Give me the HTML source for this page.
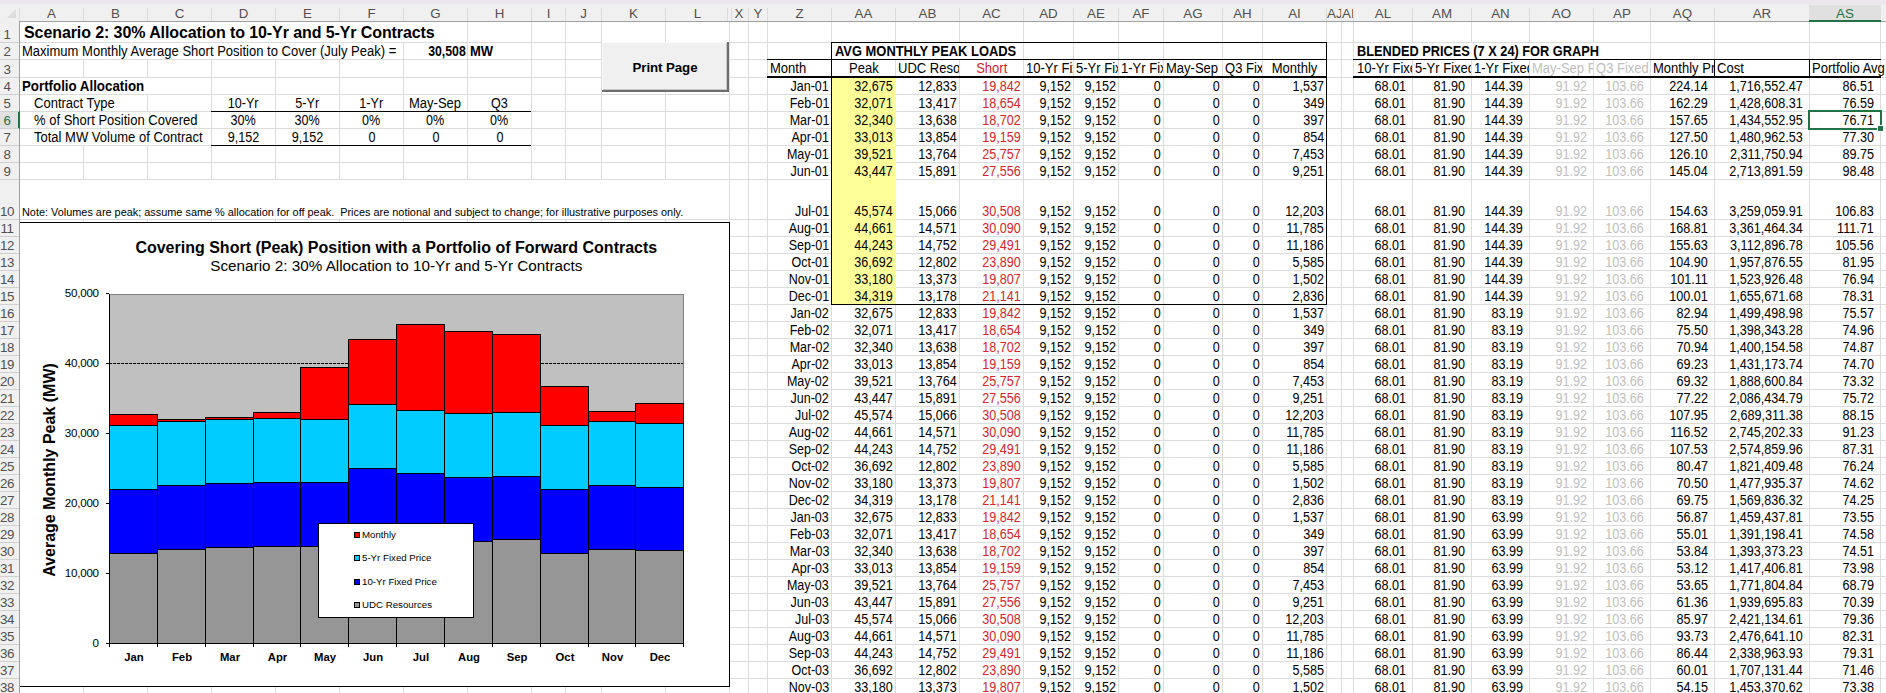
<!DOCTYPE html>
<html><head><meta charset="utf-8"><title>Scenario 2</title>
<style>
html,body{margin:0;padding:0;}
body{width:1886px;height:693px;overflow:hidden;position:relative;background:#fff;font-family:"Liberation Sans", sans-serif;}
.t{position:absolute;white-space:nowrap;}
.v{position:absolute;width:1px;}
.h{position:absolute;height:1px;}
.m{position:absolute;background:#fff;}
</style></head><body>
<div class="v" style="left:83px;top:21px;height:672px;background:#dcdcdc"></div>
<div class="v" style="left:147px;top:21px;height:672px;background:#dcdcdc"></div>
<div class="v" style="left:211px;top:21px;height:672px;background:#dcdcdc"></div>
<div class="v" style="left:275px;top:21px;height:672px;background:#dcdcdc"></div>
<div class="v" style="left:339px;top:21px;height:672px;background:#dcdcdc"></div>
<div class="v" style="left:403px;top:21px;height:672px;background:#dcdcdc"></div>
<div class="v" style="left:467px;top:21px;height:672px;background:#dcdcdc"></div>
<div class="v" style="left:531px;top:21px;height:672px;background:#dcdcdc"></div>
<div class="v" style="left:565px;top:21px;height:672px;background:#dcdcdc"></div>
<div class="v" style="left:601px;top:21px;height:672px;background:#dcdcdc"></div>
<div class="v" style="left:665px;top:21px;height:672px;background:#dcdcdc"></div>
<div class="v" style="left:729px;top:21px;height:672px;background:#dcdcdc"></div>
<div class="v" style="left:748px;top:21px;height:672px;background:#dcdcdc"></div>
<div class="v" style="left:767px;top:21px;height:672px;background:#dcdcdc"></div>
<div class="v" style="left:831px;top:21px;height:672px;background:#dcdcdc"></div>
<div class="v" style="left:895px;top:21px;height:672px;background:#dcdcdc"></div>
<div class="v" style="left:959px;top:21px;height:672px;background:#dcdcdc"></div>
<div class="v" style="left:1023px;top:21px;height:672px;background:#dcdcdc"></div>
<div class="v" style="left:1073px;top:21px;height:672px;background:#dcdcdc"></div>
<div class="v" style="left:1118px;top:21px;height:672px;background:#dcdcdc"></div>
<div class="v" style="left:1163px;top:21px;height:672px;background:#dcdcdc"></div>
<div class="v" style="left:1222px;top:21px;height:672px;background:#dcdcdc"></div>
<div class="v" style="left:1262px;top:21px;height:672px;background:#dcdcdc"></div>
<div class="v" style="left:1326px;top:21px;height:672px;background:#dcdcdc"></div>
<div class="v" style="left:1341px;top:21px;height:672px;background:#dcdcdc"></div>
<div class="v" style="left:1353px;top:21px;height:672px;background:#dcdcdc"></div>
<div class="v" style="left:1412px;top:21px;height:672px;background:#dcdcdc"></div>
<div class="v" style="left:1471px;top:21px;height:672px;background:#dcdcdc"></div>
<div class="v" style="left:1529px;top:21px;height:672px;background:#dcdcdc"></div>
<div class="v" style="left:1593px;top:21px;height:672px;background:#dcdcdc"></div>
<div class="v" style="left:1650px;top:21px;height:672px;background:#dcdcdc"></div>
<div class="v" style="left:1714px;top:21px;height:672px;background:#dcdcdc"></div>
<div class="v" style="left:1809px;top:21px;height:672px;background:#dcdcdc"></div>
<div class="v" style="left:1880px;top:21px;height:672px;background:#dcdcdc"></div>
<div class="h" style="left:20px;top:42px;width:1866px;background:#dcdcdc"></div>
<div class="h" style="left:20px;top:59px;width:1866px;background:#dcdcdc"></div>
<div class="h" style="left:20px;top:77px;width:1866px;background:#dcdcdc"></div>
<div class="h" style="left:20px;top:94px;width:1866px;background:#dcdcdc"></div>
<div class="h" style="left:20px;top:111px;width:1866px;background:#dcdcdc"></div>
<div class="h" style="left:20px;top:128px;width:1866px;background:#dcdcdc"></div>
<div class="h" style="left:20px;top:145px;width:1866px;background:#dcdcdc"></div>
<div class="h" style="left:20px;top:162px;width:1866px;background:#dcdcdc"></div>
<div class="h" style="left:20px;top:179px;width:1866px;background:#dcdcdc"></div>
<div class="h" style="left:20px;top:219px;width:1866px;background:#dcdcdc"></div>
<div class="h" style="left:20px;top:236px;width:1866px;background:#dcdcdc"></div>
<div class="h" style="left:20px;top:253px;width:1866px;background:#dcdcdc"></div>
<div class="h" style="left:20px;top:270px;width:1866px;background:#dcdcdc"></div>
<div class="h" style="left:20px;top:287px;width:1866px;background:#dcdcdc"></div>
<div class="h" style="left:20px;top:304px;width:1866px;background:#dcdcdc"></div>
<div class="h" style="left:20px;top:321px;width:1866px;background:#dcdcdc"></div>
<div class="h" style="left:20px;top:338px;width:1866px;background:#dcdcdc"></div>
<div class="h" style="left:20px;top:355px;width:1866px;background:#dcdcdc"></div>
<div class="h" style="left:20px;top:372px;width:1866px;background:#dcdcdc"></div>
<div class="h" style="left:20px;top:389px;width:1866px;background:#dcdcdc"></div>
<div class="h" style="left:20px;top:406px;width:1866px;background:#dcdcdc"></div>
<div class="h" style="left:20px;top:423px;width:1866px;background:#dcdcdc"></div>
<div class="h" style="left:20px;top:440px;width:1866px;background:#dcdcdc"></div>
<div class="h" style="left:20px;top:457px;width:1866px;background:#dcdcdc"></div>
<div class="h" style="left:20px;top:474px;width:1866px;background:#dcdcdc"></div>
<div class="h" style="left:20px;top:491px;width:1866px;background:#dcdcdc"></div>
<div class="h" style="left:20px;top:508px;width:1866px;background:#dcdcdc"></div>
<div class="h" style="left:20px;top:525px;width:1866px;background:#dcdcdc"></div>
<div class="h" style="left:20px;top:542px;width:1866px;background:#dcdcdc"></div>
<div class="h" style="left:20px;top:559px;width:1866px;background:#dcdcdc"></div>
<div class="h" style="left:20px;top:576px;width:1866px;background:#dcdcdc"></div>
<div class="h" style="left:20px;top:593px;width:1866px;background:#dcdcdc"></div>
<div class="h" style="left:20px;top:610px;width:1866px;background:#dcdcdc"></div>
<div class="h" style="left:20px;top:627px;width:1866px;background:#dcdcdc"></div>
<div class="h" style="left:20px;top:644px;width:1866px;background:#dcdcdc"></div>
<div class="h" style="left:20px;top:661px;width:1866px;background:#dcdcdc"></div>
<div class="h" style="left:20px;top:678px;width:1866px;background:#dcdcdc"></div>
<div class="m" style="left:20px;top:22px;width:447px;height:20px"></div>
<div class="m" style="left:20px;top:43px;width:383px;height:16px"></div>
<div class="m" style="left:20px;top:78px;width:191px;height:16px"></div>
<div class="m" style="left:20px;top:95px;width:127px;height:16px"></div>
<div class="m" style="left:20px;top:112px;width:191px;height:16px"></div>
<div class="m" style="left:20px;top:129px;width:191px;height:16px"></div>
<div class="m" style="left:20px;top:180px;width:709px;height:39px"></div>
<div class="m" style="left:832px;top:43px;width:191px;height:16px"></div>
<div class="m" style="left:1354px;top:43px;width:296px;height:16px"></div>
<div style="position:absolute;left:0;top:0;width:1886px;height:21px;background:#f0f0f0"></div>
<div style="position:absolute;left:0;top:0;width:1886px;height:6px;background:linear-gradient(#ede6ee 0px,#ebe6ee 3px,#efeff1 6px)"></div>
<div class="h" style="left:0;top:21px;width:1886px;background:#a0a0a0"></div>
<div style="position:absolute;left:0;top:21px;width:19px;height:672px;background:#f0f0f0"></div>
<div class="v" style="left:19px;top:21px;height:672px;background:#a0a0a0"></div>
<div class="v" style="left:19px;top:8px;height:13px;background:#dcdcdc"></div>
<svg style="position:absolute;left:0;top:0" width="20" height="21"><polygon points="16,9 16,18 7,18" fill="#dcdcdc"/></svg>
<div class="v" style="left:83px;top:8px;height:13px;background:#dcdcdc"></div>
<div class="v" style="left:147px;top:8px;height:13px;background:#dcdcdc"></div>
<div class="v" style="left:211px;top:8px;height:13px;background:#dcdcdc"></div>
<div class="v" style="left:275px;top:8px;height:13px;background:#dcdcdc"></div>
<div class="v" style="left:339px;top:8px;height:13px;background:#dcdcdc"></div>
<div class="v" style="left:403px;top:8px;height:13px;background:#dcdcdc"></div>
<div class="v" style="left:467px;top:8px;height:13px;background:#dcdcdc"></div>
<div class="v" style="left:531px;top:8px;height:13px;background:#dcdcdc"></div>
<div class="v" style="left:565px;top:8px;height:13px;background:#dcdcdc"></div>
<div class="v" style="left:601px;top:8px;height:13px;background:#dcdcdc"></div>
<div class="v" style="left:665px;top:8px;height:13px;background:#dcdcdc"></div>
<div class="v" style="left:729px;top:8px;height:13px;background:#dcdcdc"></div>
<div class="v" style="left:748px;top:8px;height:13px;background:#dcdcdc"></div>
<div class="v" style="left:767px;top:8px;height:13px;background:#dcdcdc"></div>
<div class="v" style="left:831px;top:8px;height:13px;background:#dcdcdc"></div>
<div class="v" style="left:895px;top:8px;height:13px;background:#dcdcdc"></div>
<div class="v" style="left:959px;top:8px;height:13px;background:#dcdcdc"></div>
<div class="v" style="left:1023px;top:8px;height:13px;background:#dcdcdc"></div>
<div class="v" style="left:1073px;top:8px;height:13px;background:#dcdcdc"></div>
<div class="v" style="left:1118px;top:8px;height:13px;background:#dcdcdc"></div>
<div class="v" style="left:1163px;top:8px;height:13px;background:#dcdcdc"></div>
<div class="v" style="left:1222px;top:8px;height:13px;background:#dcdcdc"></div>
<div class="v" style="left:1262px;top:8px;height:13px;background:#dcdcdc"></div>
<div class="v" style="left:1326px;top:8px;height:13px;background:#dcdcdc"></div>
<div class="v" style="left:1341px;top:8px;height:13px;background:#dcdcdc"></div>
<div class="v" style="left:1353px;top:8px;height:13px;background:#dcdcdc"></div>
<div class="v" style="left:1412px;top:8px;height:13px;background:#dcdcdc"></div>
<div class="v" style="left:1471px;top:8px;height:13px;background:#dcdcdc"></div>
<div class="v" style="left:1529px;top:8px;height:13px;background:#dcdcdc"></div>
<div class="v" style="left:1593px;top:8px;height:13px;background:#dcdcdc"></div>
<div class="v" style="left:1650px;top:8px;height:13px;background:#dcdcdc"></div>
<div class="v" style="left:1714px;top:8px;height:13px;background:#dcdcdc"></div>
<div class="v" style="left:1809px;top:8px;height:13px;background:#dcdcdc"></div>
<div class="v" style="left:1880px;top:8px;height:13px;background:#dcdcdc"></div>
<div class="v" style="left:727px;top:8px;height:13px;background:#dcdcdc"></div>
<div style="position:absolute;left:728px;top:8px;width:3px;height:13px;background:#f0f0f0"></div>
<div class="v" style="left:731px;top:8px;height:13px;background:#dcdcdc"></div>
<div style="position:absolute;left:1809px;top:5px;width:72px;height:16px;background:#e0e0e0"></div>
<div style="position:absolute;left:1809px;top:20px;width:72px;height:2px;background:#217346"></div>
<div class="t" style="left:20px;width:63px;top:5px;height:17px;line-height:17px;text-align:center;font-size:13.33px;color:#505050;overflow:hidden">A</div>
<div class="t" style="left:84px;width:63px;top:5px;height:17px;line-height:17px;text-align:center;font-size:13.33px;color:#505050;overflow:hidden">B</div>
<div class="t" style="left:148px;width:63px;top:5px;height:17px;line-height:17px;text-align:center;font-size:13.33px;color:#505050;overflow:hidden">C</div>
<div class="t" style="left:212px;width:63px;top:5px;height:17px;line-height:17px;text-align:center;font-size:13.33px;color:#505050;overflow:hidden">D</div>
<div class="t" style="left:276px;width:63px;top:5px;height:17px;line-height:17px;text-align:center;font-size:13.33px;color:#505050;overflow:hidden">E</div>
<div class="t" style="left:340px;width:63px;top:5px;height:17px;line-height:17px;text-align:center;font-size:13.33px;color:#505050;overflow:hidden">F</div>
<div class="t" style="left:404px;width:63px;top:5px;height:17px;line-height:17px;text-align:center;font-size:13.33px;color:#505050;overflow:hidden">G</div>
<div class="t" style="left:468px;width:63px;top:5px;height:17px;line-height:17px;text-align:center;font-size:13.33px;color:#505050;overflow:hidden">H</div>
<div class="t" style="left:532px;width:33px;top:5px;height:17px;line-height:17px;text-align:center;font-size:13.33px;color:#505050;overflow:hidden">I</div>
<div class="t" style="left:566px;width:35px;top:5px;height:17px;line-height:17px;text-align:center;font-size:13.33px;color:#505050;overflow:hidden">J</div>
<div class="t" style="left:602px;width:63px;top:5px;height:17px;line-height:17px;text-align:center;font-size:13.33px;color:#505050;overflow:hidden">K</div>
<div class="t" style="left:666px;width:63px;top:5px;height:17px;line-height:17px;text-align:center;font-size:13.33px;color:#505050;overflow:hidden">L</div>
<div class="t" style="left:730px;width:18px;top:5px;height:17px;line-height:17px;text-align:center;font-size:13.33px;color:#505050;overflow:hidden">X</div>
<div class="t" style="left:749px;width:18px;top:5px;height:17px;line-height:17px;text-align:center;font-size:13.33px;color:#505050;overflow:hidden">Y</div>
<div class="t" style="left:768px;width:63px;top:5px;height:17px;line-height:17px;text-align:center;font-size:13.33px;color:#505050;overflow:hidden">Z</div>
<div class="t" style="left:832px;width:63px;top:5px;height:17px;line-height:17px;text-align:center;font-size:13.33px;color:#505050;overflow:hidden">AA</div>
<div class="t" style="left:896px;width:63px;top:5px;height:17px;line-height:17px;text-align:center;font-size:13.33px;color:#505050;overflow:hidden">AB</div>
<div class="t" style="left:960px;width:63px;top:5px;height:17px;line-height:17px;text-align:center;font-size:13.33px;color:#505050;overflow:hidden">AC</div>
<div class="t" style="left:1024px;width:49px;top:5px;height:17px;line-height:17px;text-align:center;font-size:13.33px;color:#505050;overflow:hidden">AD</div>
<div class="t" style="left:1074px;width:44px;top:5px;height:17px;line-height:17px;text-align:center;font-size:13.33px;color:#505050;overflow:hidden">AE</div>
<div class="t" style="left:1119px;width:44px;top:5px;height:17px;line-height:17px;text-align:center;font-size:13.33px;color:#505050;overflow:hidden">AF</div>
<div class="t" style="left:1164px;width:58px;top:5px;height:17px;line-height:17px;text-align:center;font-size:13.33px;color:#505050;overflow:hidden">AG</div>
<div class="t" style="left:1223px;width:39px;top:5px;height:17px;line-height:17px;text-align:center;font-size:13.33px;color:#505050;overflow:hidden">AH</div>
<div class="t" style="left:1263px;width:63px;top:5px;height:17px;line-height:17px;text-align:center;font-size:13.33px;color:#505050;overflow:hidden">AI</div>
<div class="t" style="left:1327px;width:14px;top:5px;height:17px;line-height:17px;text-align:center;font-size:13.33px;color:#505050;overflow:hidden">AJ</div>
<div class="t" style="left:1342px;width:11px;top:5px;height:17px;line-height:17px;text-align:center;font-size:13.33px;color:#505050;overflow:hidden">AI</div>
<div class="t" style="left:1354px;width:58px;top:5px;height:17px;line-height:17px;text-align:center;font-size:13.33px;color:#505050;overflow:hidden">AL</div>
<div class="t" style="left:1413px;width:58px;top:5px;height:17px;line-height:17px;text-align:center;font-size:13.33px;color:#505050;overflow:hidden">AM</div>
<div class="t" style="left:1472px;width:57px;top:5px;height:17px;line-height:17px;text-align:center;font-size:13.33px;color:#505050;overflow:hidden">AN</div>
<div class="t" style="left:1530px;width:63px;top:5px;height:17px;line-height:17px;text-align:center;font-size:13.33px;color:#505050;overflow:hidden">AO</div>
<div class="t" style="left:1594px;width:56px;top:5px;height:17px;line-height:17px;text-align:center;font-size:13.33px;color:#505050;overflow:hidden">AP</div>
<div class="t" style="left:1651px;width:63px;top:5px;height:17px;line-height:17px;text-align:center;font-size:13.33px;color:#505050;overflow:hidden">AQ</div>
<div class="t" style="left:1715px;width:94px;top:5px;height:17px;line-height:17px;text-align:center;font-size:13.33px;color:#505050;overflow:hidden">AR</div>
<div class="t" style="left:1810px;width:70px;top:5px;height:17px;line-height:17px;text-align:center;font-size:13.33px;color:#217346;overflow:hidden">AS</div>
<div class="t" style="left:-5px;width:24px;top:26px;height:17px;line-height:17px;text-align:center;font-size:13.33px;color:#505050;letter-spacing:-0.3px">1</div>
<div class="t" style="left:-5px;width:24px;top:43px;height:17px;line-height:17px;text-align:center;font-size:13.33px;color:#505050;letter-spacing:-0.3px">2</div>
<div class="t" style="left:-5px;width:24px;top:61px;height:17px;line-height:17px;text-align:center;font-size:13.33px;color:#505050;letter-spacing:-0.3px">3</div>
<div class="t" style="left:-5px;width:24px;top:78px;height:17px;line-height:17px;text-align:center;font-size:13.33px;color:#505050;letter-spacing:-0.3px">4</div>
<div class="t" style="left:-5px;width:24px;top:95px;height:17px;line-height:17px;text-align:center;font-size:13.33px;color:#505050;letter-spacing:-0.3px">5</div>
<div style="position:absolute;left:0;top:112px;width:19px;height:16px;background:#e0e0e0"></div>
<div class="t" style="left:-5px;width:24px;top:112px;height:17px;line-height:17px;text-align:center;font-size:13.33px;color:#217346;letter-spacing:-0.3px">6</div>
<div class="t" style="left:-5px;width:24px;top:129px;height:17px;line-height:17px;text-align:center;font-size:13.33px;color:#505050;letter-spacing:-0.3px">7</div>
<div class="t" style="left:-5px;width:24px;top:146px;height:17px;line-height:17px;text-align:center;font-size:13.33px;color:#505050;letter-spacing:-0.3px">8</div>
<div class="t" style="left:-5px;width:24px;top:163px;height:17px;line-height:17px;text-align:center;font-size:13.33px;color:#505050;letter-spacing:-0.3px">9</div>
<div class="t" style="left:-5px;width:24px;top:203px;height:17px;line-height:17px;text-align:center;font-size:13.33px;color:#505050;letter-spacing:-0.3px">10</div>
<div class="t" style="left:-5px;width:24px;top:220px;height:17px;line-height:17px;text-align:center;font-size:13.33px;color:#505050;letter-spacing:-0.3px">11</div>
<div class="t" style="left:-5px;width:24px;top:237px;height:17px;line-height:17px;text-align:center;font-size:13.33px;color:#505050;letter-spacing:-0.3px">12</div>
<div class="t" style="left:-5px;width:24px;top:254px;height:17px;line-height:17px;text-align:center;font-size:13.33px;color:#505050;letter-spacing:-0.3px">13</div>
<div class="t" style="left:-5px;width:24px;top:271px;height:17px;line-height:17px;text-align:center;font-size:13.33px;color:#505050;letter-spacing:-0.3px">14</div>
<div class="t" style="left:-5px;width:24px;top:288px;height:17px;line-height:17px;text-align:center;font-size:13.33px;color:#505050;letter-spacing:-0.3px">15</div>
<div class="t" style="left:-5px;width:24px;top:305px;height:17px;line-height:17px;text-align:center;font-size:13.33px;color:#505050;letter-spacing:-0.3px">16</div>
<div class="t" style="left:-5px;width:24px;top:322px;height:17px;line-height:17px;text-align:center;font-size:13.33px;color:#505050;letter-spacing:-0.3px">17</div>
<div class="t" style="left:-5px;width:24px;top:339px;height:17px;line-height:17px;text-align:center;font-size:13.33px;color:#505050;letter-spacing:-0.3px">18</div>
<div class="t" style="left:-5px;width:24px;top:356px;height:17px;line-height:17px;text-align:center;font-size:13.33px;color:#505050;letter-spacing:-0.3px">19</div>
<div class="t" style="left:-5px;width:24px;top:373px;height:17px;line-height:17px;text-align:center;font-size:13.33px;color:#505050;letter-spacing:-0.3px">20</div>
<div class="t" style="left:-5px;width:24px;top:390px;height:17px;line-height:17px;text-align:center;font-size:13.33px;color:#505050;letter-spacing:-0.3px">21</div>
<div class="t" style="left:-5px;width:24px;top:407px;height:17px;line-height:17px;text-align:center;font-size:13.33px;color:#505050;letter-spacing:-0.3px">22</div>
<div class="t" style="left:-5px;width:24px;top:424px;height:17px;line-height:17px;text-align:center;font-size:13.33px;color:#505050;letter-spacing:-0.3px">23</div>
<div class="t" style="left:-5px;width:24px;top:441px;height:17px;line-height:17px;text-align:center;font-size:13.33px;color:#505050;letter-spacing:-0.3px">24</div>
<div class="t" style="left:-5px;width:24px;top:458px;height:17px;line-height:17px;text-align:center;font-size:13.33px;color:#505050;letter-spacing:-0.3px">25</div>
<div class="t" style="left:-5px;width:24px;top:475px;height:17px;line-height:17px;text-align:center;font-size:13.33px;color:#505050;letter-spacing:-0.3px">26</div>
<div class="t" style="left:-5px;width:24px;top:492px;height:17px;line-height:17px;text-align:center;font-size:13.33px;color:#505050;letter-spacing:-0.3px">27</div>
<div class="t" style="left:-5px;width:24px;top:509px;height:17px;line-height:17px;text-align:center;font-size:13.33px;color:#505050;letter-spacing:-0.3px">28</div>
<div class="t" style="left:-5px;width:24px;top:526px;height:17px;line-height:17px;text-align:center;font-size:13.33px;color:#505050;letter-spacing:-0.3px">29</div>
<div class="t" style="left:-5px;width:24px;top:543px;height:17px;line-height:17px;text-align:center;font-size:13.33px;color:#505050;letter-spacing:-0.3px">30</div>
<div class="t" style="left:-5px;width:24px;top:560px;height:17px;line-height:17px;text-align:center;font-size:13.33px;color:#505050;letter-spacing:-0.3px">31</div>
<div class="t" style="left:-5px;width:24px;top:577px;height:17px;line-height:17px;text-align:center;font-size:13.33px;color:#505050;letter-spacing:-0.3px">32</div>
<div class="t" style="left:-5px;width:24px;top:594px;height:17px;line-height:17px;text-align:center;font-size:13.33px;color:#505050;letter-spacing:-0.3px">33</div>
<div class="t" style="left:-5px;width:24px;top:611px;height:17px;line-height:17px;text-align:center;font-size:13.33px;color:#505050;letter-spacing:-0.3px">34</div>
<div class="t" style="left:-5px;width:24px;top:628px;height:17px;line-height:17px;text-align:center;font-size:13.33px;color:#505050;letter-spacing:-0.3px">35</div>
<div class="t" style="left:-5px;width:24px;top:645px;height:17px;line-height:17px;text-align:center;font-size:13.33px;color:#505050;letter-spacing:-0.3px">36</div>
<div class="t" style="left:-5px;width:24px;top:662px;height:17px;line-height:17px;text-align:center;font-size:13.33px;color:#505050;letter-spacing:-0.3px">37</div>
<div class="t" style="left:-5px;width:24px;top:679px;height:17px;line-height:17px;text-align:center;font-size:13.33px;color:#505050;letter-spacing:-0.3px">38</div>
<div style="position:absolute;left:18px;top:111px;width:2px;height:18px;background:#217346"></div>
<div class="h" style="left:0;top:42px;width:19px;background:#d0d0d0"></div>
<div class="h" style="left:0;top:59px;width:19px;background:#d0d0d0"></div>
<div class="h" style="left:0;top:77px;width:19px;background:#d0d0d0"></div>
<div class="h" style="left:0;top:94px;width:19px;background:#d0d0d0"></div>
<div class="h" style="left:0;top:111px;width:19px;background:#d0d0d0"></div>
<div class="h" style="left:0;top:128px;width:19px;background:#d0d0d0"></div>
<div class="h" style="left:0;top:145px;width:19px;background:#d0d0d0"></div>
<div class="h" style="left:0;top:162px;width:19px;background:#d0d0d0"></div>
<div class="h" style="left:0;top:179px;width:19px;background:#d0d0d0"></div>
<div class="h" style="left:0;top:219px;width:19px;background:#d0d0d0"></div>
<div class="h" style="left:0;top:236px;width:19px;background:#d0d0d0"></div>
<div class="h" style="left:0;top:253px;width:19px;background:#d0d0d0"></div>
<div class="h" style="left:0;top:270px;width:19px;background:#d0d0d0"></div>
<div class="h" style="left:0;top:287px;width:19px;background:#d0d0d0"></div>
<div class="h" style="left:0;top:304px;width:19px;background:#d0d0d0"></div>
<div class="h" style="left:0;top:321px;width:19px;background:#d0d0d0"></div>
<div class="h" style="left:0;top:338px;width:19px;background:#d0d0d0"></div>
<div class="h" style="left:0;top:355px;width:19px;background:#d0d0d0"></div>
<div class="h" style="left:0;top:372px;width:19px;background:#d0d0d0"></div>
<div class="h" style="left:0;top:389px;width:19px;background:#d0d0d0"></div>
<div class="h" style="left:0;top:406px;width:19px;background:#d0d0d0"></div>
<div class="h" style="left:0;top:423px;width:19px;background:#d0d0d0"></div>
<div class="h" style="left:0;top:440px;width:19px;background:#d0d0d0"></div>
<div class="h" style="left:0;top:457px;width:19px;background:#d0d0d0"></div>
<div class="h" style="left:0;top:474px;width:19px;background:#d0d0d0"></div>
<div class="h" style="left:0;top:491px;width:19px;background:#d0d0d0"></div>
<div class="h" style="left:0;top:508px;width:19px;background:#d0d0d0"></div>
<div class="h" style="left:0;top:525px;width:19px;background:#d0d0d0"></div>
<div class="h" style="left:0;top:542px;width:19px;background:#d0d0d0"></div>
<div class="h" style="left:0;top:559px;width:19px;background:#d0d0d0"></div>
<div class="h" style="left:0;top:576px;width:19px;background:#d0d0d0"></div>
<div class="h" style="left:0;top:593px;width:19px;background:#d0d0d0"></div>
<div class="h" style="left:0;top:610px;width:19px;background:#d0d0d0"></div>
<div class="h" style="left:0;top:627px;width:19px;background:#d0d0d0"></div>
<div class="h" style="left:0;top:644px;width:19px;background:#d0d0d0"></div>
<div class="h" style="left:0;top:661px;width:19px;background:#d0d0d0"></div>
<div class="h" style="left:0;top:678px;width:19px;background:#d0d0d0"></div>
<div class="h" style="left:0;top:695px;width:19px;background:#d0d0d0"></div>
<div class="t" style="top:26px;height:17px;line-height:17px;font-size:16px;color:#000;font-weight:bold;letter-spacing:-0.09px;left:24px;line-height:19px;height:19px;top:23px;">Scenario 2: 30% Allocation to 10-Yr and 5-Yr Contracts</div>
<div class="t" style="top:43px;height:17px;line-height:17px;font-size:14px;color:#000;left:22px;"><span style="display:inline-block;transform:scaleX(0.93);transform-origin:left">Maximum Monthly Average Short Position to Cover (July Peak) =</span></div>
<div class="t" style="top:43px;height:17px;line-height:17px;font-size:14px;color:#000;font-weight:bold;right:1420px;"><span style="display:inline-block;transform:scaleX(0.88);transform-origin:right">30,508</span></div>
<div class="t" style="top:43px;height:17px;line-height:17px;font-size:14px;color:#000;font-weight:bold;left:470px;"><span style="display:inline-block;transform:scaleX(0.93);transform-origin:left">MW</span></div>
<div class="t" style="top:78px;height:17px;line-height:17px;font-size:14px;color:#000;font-weight:bold;left:22px;"><span style="display:inline-block;transform:scaleX(0.95);transform-origin:left">Portfolio Allocation</span></div>
<div class="t" style="top:95px;height:17px;line-height:17px;font-size:14px;color:#000;left:34px;"><span style="display:inline-block;transform:scaleX(0.93);transform-origin:left">Contract Type</span></div>
<div class="t" style="top:112px;height:17px;line-height:17px;font-size:14px;color:#000;left:34px;"><span style="display:inline-block;transform:scaleX(0.93);transform-origin:left">% of Short Position Covered</span></div>
<div class="t" style="top:129px;height:17px;line-height:17px;font-size:14px;color:#000;left:34px;"><span style="display:inline-block;transform:scaleX(0.93);transform-origin:left">Total MW Volume of Contract</span></div>
<div class="t" style="top:95px;height:17px;line-height:17px;font-size:14px;color:#000;left:212px;width:63px;text-align:center;"><span style="display:inline-block;transform:scaleX(0.9);transform-origin:center">10-Yr</span></div>
<div class="t" style="top:112px;height:17px;line-height:17px;font-size:14px;color:#000;left:212px;width:63px;text-align:center;"><span style="display:inline-block;transform:scaleX(0.9);transform-origin:center">30%</span></div>
<div class="t" style="top:129px;height:17px;line-height:17px;font-size:14px;color:#000;left:212px;width:63px;text-align:center;"><span style="display:inline-block;transform:scaleX(0.9);transform-origin:center">9,152</span></div>
<div class="t" style="top:95px;height:17px;line-height:17px;font-size:14px;color:#000;left:276px;width:63px;text-align:center;"><span style="display:inline-block;transform:scaleX(0.9);transform-origin:center">5-Yr</span></div>
<div class="t" style="top:112px;height:17px;line-height:17px;font-size:14px;color:#000;left:276px;width:63px;text-align:center;"><span style="display:inline-block;transform:scaleX(0.9);transform-origin:center">30%</span></div>
<div class="t" style="top:129px;height:17px;line-height:17px;font-size:14px;color:#000;left:276px;width:63px;text-align:center;"><span style="display:inline-block;transform:scaleX(0.9);transform-origin:center">9,152</span></div>
<div class="t" style="top:95px;height:17px;line-height:17px;font-size:14px;color:#000;left:340px;width:63px;text-align:center;"><span style="display:inline-block;transform:scaleX(0.9);transform-origin:center">1-Yr</span></div>
<div class="t" style="top:112px;height:17px;line-height:17px;font-size:14px;color:#000;left:340px;width:63px;text-align:center;"><span style="display:inline-block;transform:scaleX(0.9);transform-origin:center">0%</span></div>
<div class="t" style="top:129px;height:17px;line-height:17px;font-size:14px;color:#000;left:340px;width:63px;text-align:center;"><span style="display:inline-block;transform:scaleX(0.9);transform-origin:center">0</span></div>
<div class="t" style="top:95px;height:17px;line-height:17px;font-size:14px;color:#000;left:404px;width:63px;text-align:center;"><span style="display:inline-block;transform:scaleX(0.93);transform-origin:center">May-Sep</span></div>
<div class="t" style="top:112px;height:17px;line-height:17px;font-size:14px;color:#000;left:404px;width:63px;text-align:center;"><span style="display:inline-block;transform:scaleX(0.9);transform-origin:center">0%</span></div>
<div class="t" style="top:129px;height:17px;line-height:17px;font-size:14px;color:#000;left:404px;width:63px;text-align:center;"><span style="display:inline-block;transform:scaleX(0.9);transform-origin:center">0</span></div>
<div class="t" style="top:95px;height:17px;line-height:17px;font-size:14px;color:#000;left:468px;width:63px;text-align:center;"><span style="display:inline-block;transform:scaleX(0.9);transform-origin:center">Q3</span></div>
<div class="t" style="top:112px;height:17px;line-height:17px;font-size:14px;color:#000;left:468px;width:63px;text-align:center;"><span style="display:inline-block;transform:scaleX(0.9);transform-origin:center">0%</span></div>
<div class="t" style="top:129px;height:17px;line-height:17px;font-size:14px;color:#000;left:468px;width:63px;text-align:center;"><span style="display:inline-block;transform:scaleX(0.9);transform-origin:center">0</span></div>
<div class="h" style="left:211px;top:111px;width:320px;background:#000"></div>
<div class="h" style="left:211px;top:145px;width:320px;background:#000"></div>
<div class="t" style="top:203px;height:17px;line-height:17px;font-size:10.9px;color:#000;left:22px;white-space:pre;top:204px;">Note: Volumes are peak; assume same % allocation for off peak.  Prices are notional and subject to change; for illustrative purposes only.</div>
<div style="position:absolute;left:602px;top:42px;width:127px;height:50px;background:#f0f0f0;border-top:1px solid #fafafa;border-left:1px solid #fafafa;box-sizing:border-box"></div>
<div style="position:absolute;left:602px;top:90px;width:127px;height:2px;background:#6e6e6e"></div>
<div style="position:absolute;left:727px;top:42px;width:2px;height:50px;background:#6e6e6e"></div>
<div style="position:absolute;left:603px;top:89px;width:124px;height:1px;background:#c8c8c8"></div>
<div style="position:absolute;left:726px;top:43px;width:1px;height:47px;background:#c8c8c8"></div>
<div class="t" style="left:602px;top:59px;width:126px;height:17px;line-height:17px;text-align:center;font-size:13.33px;font-weight:bold;letter-spacing:-0.1px">Print Page</div>
<div style="position:absolute;left:832px;top:78px;width:64px;height:226px;background:#ffff99"></div>
<div class="t" style="top:43px;height:17px;line-height:17px;font-size:14px;color:#000;font-weight:bold;left:835px;"><span style="display:inline-block;transform:scaleX(0.922);transform-origin:left">AVG MONTHLY PEAK LOADS</span></div>
<div class="t" style="top:60px;height:17px;line-height:17px;font-size:14px;color:#000;left:770px;"><span style="display:inline-block;transform:scaleX(0.93);transform-origin:left">Month</span></div>
<div class="t" style="top:60px;height:17px;line-height:17px;font-size:14px;color:#000;left:832px;width:63px;text-align:center;"><span style="display:inline-block;transform:scaleX(0.93);transform-origin:center">Peak</span></div>
<div class="t" style="top:60px;height:17px;line-height:17px;font-size:14px;color:#000;left:896px;width:63px;overflow:hidden;padding-left:2px;box-sizing:border-box;"><span style="display:inline-block;transform:scaleX(0.93);transform-origin:left">UDC Resources</span></div>
<div class="t" style="top:60px;height:17px;line-height:17px;font-size:14px;color:#d4262c;left:960px;width:63px;text-align:center;"><span style="display:inline-block;transform:scaleX(0.93);transform-origin:center">Short</span></div>
<div class="t" style="top:60px;height:17px;line-height:17px;font-size:14px;color:#000;left:1024px;width:49px;overflow:hidden;padding-left:2px;box-sizing:border-box;"><span style="display:inline-block;transform:scaleX(0.93);transform-origin:left">10-Yr Fixed</span></div>
<div class="t" style="top:60px;height:17px;line-height:17px;font-size:14px;color:#000;left:1074px;width:44px;overflow:hidden;padding-left:2px;box-sizing:border-box;"><span style="display:inline-block;transform:scaleX(0.93);transform-origin:left">5-Yr Fixed</span></div>
<div class="t" style="top:60px;height:17px;line-height:17px;font-size:14px;color:#000;left:1119px;width:44px;overflow:hidden;padding-left:2px;box-sizing:border-box;"><span style="display:inline-block;transform:scaleX(0.93);transform-origin:left">1-Yr Fixed</span></div>
<div class="t" style="top:60px;height:17px;line-height:17px;font-size:14px;color:#000;left:1164px;width:58px;overflow:hidden;padding-left:2px;box-sizing:border-box;"><span style="display:inline-block;transform:scaleX(0.93);transform-origin:left">May-Sep Fixed</span></div>
<div class="t" style="top:60px;height:17px;line-height:17px;font-size:14px;color:#000;left:1223px;width:39px;overflow:hidden;padding-left:2px;box-sizing:border-box;"><span style="display:inline-block;transform:scaleX(0.93);transform-origin:left">Q3 Fixed</span></div>
<div class="t" style="top:60px;height:17px;line-height:17px;font-size:14px;color:#000;left:1263px;width:63px;text-align:center;"><span style="display:inline-block;transform:scaleX(0.93);transform-origin:center">Monthly</span></div>
<div class="t" style="top:78px;height:17px;line-height:17px;font-size:14px;color:#000;right:1057px;"><span style="display:inline-block;transform:scaleX(0.895);transform-origin:right">Jan-01</span></div>
<div class="t" style="top:78px;height:17px;line-height:17px;font-size:14px;color:#000;right:993px;"><span style="display:inline-block;transform:scaleX(0.9);transform-origin:right">32,675</span></div>
<div class="t" style="top:78px;height:17px;line-height:17px;font-size:14px;color:#000;right:929px;"><span style="display:inline-block;transform:scaleX(0.9);transform-origin:right">12,833</span></div>
<div class="t" style="top:78px;height:17px;line-height:17px;font-size:14px;color:#d4262c;right:865px;"><span style="display:inline-block;transform:scaleX(0.9);transform-origin:right">19,842</span></div>
<div class="t" style="top:78px;height:17px;line-height:17px;font-size:14px;color:#000;right:815px;"><span style="display:inline-block;transform:scaleX(0.9);transform-origin:right">9,152</span></div>
<div class="t" style="top:78px;height:17px;line-height:17px;font-size:14px;color:#000;right:770px;"><span style="display:inline-block;transform:scaleX(0.9);transform-origin:right">9,152</span></div>
<div class="t" style="top:78px;height:17px;line-height:17px;font-size:14px;color:#000;right:725px;"><span style="display:inline-block;transform:scaleX(0.9);transform-origin:right">0</span></div>
<div class="t" style="top:78px;height:17px;line-height:17px;font-size:14px;color:#000;right:666px;"><span style="display:inline-block;transform:scaleX(0.9);transform-origin:right">0</span></div>
<div class="t" style="top:78px;height:17px;line-height:17px;font-size:14px;color:#000;right:626px;"><span style="display:inline-block;transform:scaleX(0.9);transform-origin:right">0</span></div>
<div class="t" style="top:78px;height:17px;line-height:17px;font-size:14px;color:#000;right:562px;"><span style="display:inline-block;transform:scaleX(0.9);transform-origin:right">1,537</span></div>
<div class="t" style="top:78px;height:17px;line-height:17px;font-size:14px;color:#000;right:480px;"><span style="display:inline-block;transform:scaleX(0.9);transform-origin:right">68.01</span></div>
<div class="t" style="top:78px;height:17px;line-height:17px;font-size:14px;color:#000;right:421px;"><span style="display:inline-block;transform:scaleX(0.9);transform-origin:right">81.90</span></div>
<div class="t" style="top:78px;height:17px;line-height:17px;font-size:14px;color:#000;right:363px;"><span style="display:inline-block;transform:scaleX(0.9);transform-origin:right">144.39</span></div>
<div class="t" style="top:78px;height:17px;line-height:17px;font-size:14px;color:#c0c0c0;right:299px;"><span style="display:inline-block;transform:scaleX(0.9);transform-origin:right">91.92</span></div>
<div class="t" style="top:78px;height:17px;line-height:17px;font-size:14px;color:#c0c0c0;right:242px;"><span style="display:inline-block;transform:scaleX(0.9);transform-origin:right">103.66</span></div>
<div class="t" style="top:78px;height:17px;line-height:17px;font-size:14px;color:#000;right:178px;"><span style="display:inline-block;transform:scaleX(0.9);transform-origin:right">224.14</span></div>
<div class="t" style="top:78px;height:17px;line-height:17px;font-size:14px;color:#000;right:83px;"><span style="display:inline-block;transform:scaleX(0.9);transform-origin:right">1,716,552.47</span></div>
<div class="t" style="top:78px;height:17px;line-height:17px;font-size:14px;color:#000;right:12px;"><span style="display:inline-block;transform:scaleX(0.9);transform-origin:right">86.51</span></div>
<div class="t" style="top:95px;height:17px;line-height:17px;font-size:14px;color:#000;right:1057px;"><span style="display:inline-block;transform:scaleX(0.895);transform-origin:right">Feb-01</span></div>
<div class="t" style="top:95px;height:17px;line-height:17px;font-size:14px;color:#000;right:993px;"><span style="display:inline-block;transform:scaleX(0.9);transform-origin:right">32,071</span></div>
<div class="t" style="top:95px;height:17px;line-height:17px;font-size:14px;color:#000;right:929px;"><span style="display:inline-block;transform:scaleX(0.9);transform-origin:right">13,417</span></div>
<div class="t" style="top:95px;height:17px;line-height:17px;font-size:14px;color:#d4262c;right:865px;"><span style="display:inline-block;transform:scaleX(0.9);transform-origin:right">18,654</span></div>
<div class="t" style="top:95px;height:17px;line-height:17px;font-size:14px;color:#000;right:815px;"><span style="display:inline-block;transform:scaleX(0.9);transform-origin:right">9,152</span></div>
<div class="t" style="top:95px;height:17px;line-height:17px;font-size:14px;color:#000;right:770px;"><span style="display:inline-block;transform:scaleX(0.9);transform-origin:right">9,152</span></div>
<div class="t" style="top:95px;height:17px;line-height:17px;font-size:14px;color:#000;right:725px;"><span style="display:inline-block;transform:scaleX(0.9);transform-origin:right">0</span></div>
<div class="t" style="top:95px;height:17px;line-height:17px;font-size:14px;color:#000;right:666px;"><span style="display:inline-block;transform:scaleX(0.9);transform-origin:right">0</span></div>
<div class="t" style="top:95px;height:17px;line-height:17px;font-size:14px;color:#000;right:626px;"><span style="display:inline-block;transform:scaleX(0.9);transform-origin:right">0</span></div>
<div class="t" style="top:95px;height:17px;line-height:17px;font-size:14px;color:#000;right:562px;"><span style="display:inline-block;transform:scaleX(0.9);transform-origin:right">349</span></div>
<div class="t" style="top:95px;height:17px;line-height:17px;font-size:14px;color:#000;right:480px;"><span style="display:inline-block;transform:scaleX(0.9);transform-origin:right">68.01</span></div>
<div class="t" style="top:95px;height:17px;line-height:17px;font-size:14px;color:#000;right:421px;"><span style="display:inline-block;transform:scaleX(0.9);transform-origin:right">81.90</span></div>
<div class="t" style="top:95px;height:17px;line-height:17px;font-size:14px;color:#000;right:363px;"><span style="display:inline-block;transform:scaleX(0.9);transform-origin:right">144.39</span></div>
<div class="t" style="top:95px;height:17px;line-height:17px;font-size:14px;color:#c0c0c0;right:299px;"><span style="display:inline-block;transform:scaleX(0.9);transform-origin:right">91.92</span></div>
<div class="t" style="top:95px;height:17px;line-height:17px;font-size:14px;color:#c0c0c0;right:242px;"><span style="display:inline-block;transform:scaleX(0.9);transform-origin:right">103.66</span></div>
<div class="t" style="top:95px;height:17px;line-height:17px;font-size:14px;color:#000;right:178px;"><span style="display:inline-block;transform:scaleX(0.9);transform-origin:right">162.29</span></div>
<div class="t" style="top:95px;height:17px;line-height:17px;font-size:14px;color:#000;right:83px;"><span style="display:inline-block;transform:scaleX(0.9);transform-origin:right">1,428,608.31</span></div>
<div class="t" style="top:95px;height:17px;line-height:17px;font-size:14px;color:#000;right:12px;"><span style="display:inline-block;transform:scaleX(0.9);transform-origin:right">76.59</span></div>
<div class="t" style="top:112px;height:17px;line-height:17px;font-size:14px;color:#000;right:1057px;"><span style="display:inline-block;transform:scaleX(0.895);transform-origin:right">Mar-01</span></div>
<div class="t" style="top:112px;height:17px;line-height:17px;font-size:14px;color:#000;right:993px;"><span style="display:inline-block;transform:scaleX(0.9);transform-origin:right">32,340</span></div>
<div class="t" style="top:112px;height:17px;line-height:17px;font-size:14px;color:#000;right:929px;"><span style="display:inline-block;transform:scaleX(0.9);transform-origin:right">13,638</span></div>
<div class="t" style="top:112px;height:17px;line-height:17px;font-size:14px;color:#d4262c;right:865px;"><span style="display:inline-block;transform:scaleX(0.9);transform-origin:right">18,702</span></div>
<div class="t" style="top:112px;height:17px;line-height:17px;font-size:14px;color:#000;right:815px;"><span style="display:inline-block;transform:scaleX(0.9);transform-origin:right">9,152</span></div>
<div class="t" style="top:112px;height:17px;line-height:17px;font-size:14px;color:#000;right:770px;"><span style="display:inline-block;transform:scaleX(0.9);transform-origin:right">9,152</span></div>
<div class="t" style="top:112px;height:17px;line-height:17px;font-size:14px;color:#000;right:725px;"><span style="display:inline-block;transform:scaleX(0.9);transform-origin:right">0</span></div>
<div class="t" style="top:112px;height:17px;line-height:17px;font-size:14px;color:#000;right:666px;"><span style="display:inline-block;transform:scaleX(0.9);transform-origin:right">0</span></div>
<div class="t" style="top:112px;height:17px;line-height:17px;font-size:14px;color:#000;right:626px;"><span style="display:inline-block;transform:scaleX(0.9);transform-origin:right">0</span></div>
<div class="t" style="top:112px;height:17px;line-height:17px;font-size:14px;color:#000;right:562px;"><span style="display:inline-block;transform:scaleX(0.9);transform-origin:right">397</span></div>
<div class="t" style="top:112px;height:17px;line-height:17px;font-size:14px;color:#000;right:480px;"><span style="display:inline-block;transform:scaleX(0.9);transform-origin:right">68.01</span></div>
<div class="t" style="top:112px;height:17px;line-height:17px;font-size:14px;color:#000;right:421px;"><span style="display:inline-block;transform:scaleX(0.9);transform-origin:right">81.90</span></div>
<div class="t" style="top:112px;height:17px;line-height:17px;font-size:14px;color:#000;right:363px;"><span style="display:inline-block;transform:scaleX(0.9);transform-origin:right">144.39</span></div>
<div class="t" style="top:112px;height:17px;line-height:17px;font-size:14px;color:#c0c0c0;right:299px;"><span style="display:inline-block;transform:scaleX(0.9);transform-origin:right">91.92</span></div>
<div class="t" style="top:112px;height:17px;line-height:17px;font-size:14px;color:#c0c0c0;right:242px;"><span style="display:inline-block;transform:scaleX(0.9);transform-origin:right">103.66</span></div>
<div class="t" style="top:112px;height:17px;line-height:17px;font-size:14px;color:#000;right:178px;"><span style="display:inline-block;transform:scaleX(0.9);transform-origin:right">157.65</span></div>
<div class="t" style="top:112px;height:17px;line-height:17px;font-size:14px;color:#000;right:83px;"><span style="display:inline-block;transform:scaleX(0.9);transform-origin:right">1,434,552.95</span></div>
<div class="t" style="top:112px;height:17px;line-height:17px;font-size:14px;color:#000;right:12px;"><span style="display:inline-block;transform:scaleX(0.9);transform-origin:right">76.71</span></div>
<div class="t" style="top:129px;height:17px;line-height:17px;font-size:14px;color:#000;right:1057px;"><span style="display:inline-block;transform:scaleX(0.895);transform-origin:right">Apr-01</span></div>
<div class="t" style="top:129px;height:17px;line-height:17px;font-size:14px;color:#000;right:993px;"><span style="display:inline-block;transform:scaleX(0.9);transform-origin:right">33,013</span></div>
<div class="t" style="top:129px;height:17px;line-height:17px;font-size:14px;color:#000;right:929px;"><span style="display:inline-block;transform:scaleX(0.9);transform-origin:right">13,854</span></div>
<div class="t" style="top:129px;height:17px;line-height:17px;font-size:14px;color:#d4262c;right:865px;"><span style="display:inline-block;transform:scaleX(0.9);transform-origin:right">19,159</span></div>
<div class="t" style="top:129px;height:17px;line-height:17px;font-size:14px;color:#000;right:815px;"><span style="display:inline-block;transform:scaleX(0.9);transform-origin:right">9,152</span></div>
<div class="t" style="top:129px;height:17px;line-height:17px;font-size:14px;color:#000;right:770px;"><span style="display:inline-block;transform:scaleX(0.9);transform-origin:right">9,152</span></div>
<div class="t" style="top:129px;height:17px;line-height:17px;font-size:14px;color:#000;right:725px;"><span style="display:inline-block;transform:scaleX(0.9);transform-origin:right">0</span></div>
<div class="t" style="top:129px;height:17px;line-height:17px;font-size:14px;color:#000;right:666px;"><span style="display:inline-block;transform:scaleX(0.9);transform-origin:right">0</span></div>
<div class="t" style="top:129px;height:17px;line-height:17px;font-size:14px;color:#000;right:626px;"><span style="display:inline-block;transform:scaleX(0.9);transform-origin:right">0</span></div>
<div class="t" style="top:129px;height:17px;line-height:17px;font-size:14px;color:#000;right:562px;"><span style="display:inline-block;transform:scaleX(0.9);transform-origin:right">854</span></div>
<div class="t" style="top:129px;height:17px;line-height:17px;font-size:14px;color:#000;right:480px;"><span style="display:inline-block;transform:scaleX(0.9);transform-origin:right">68.01</span></div>
<div class="t" style="top:129px;height:17px;line-height:17px;font-size:14px;color:#000;right:421px;"><span style="display:inline-block;transform:scaleX(0.9);transform-origin:right">81.90</span></div>
<div class="t" style="top:129px;height:17px;line-height:17px;font-size:14px;color:#000;right:363px;"><span style="display:inline-block;transform:scaleX(0.9);transform-origin:right">144.39</span></div>
<div class="t" style="top:129px;height:17px;line-height:17px;font-size:14px;color:#c0c0c0;right:299px;"><span style="display:inline-block;transform:scaleX(0.9);transform-origin:right">91.92</span></div>
<div class="t" style="top:129px;height:17px;line-height:17px;font-size:14px;color:#c0c0c0;right:242px;"><span style="display:inline-block;transform:scaleX(0.9);transform-origin:right">103.66</span></div>
<div class="t" style="top:129px;height:17px;line-height:17px;font-size:14px;color:#000;right:178px;"><span style="display:inline-block;transform:scaleX(0.9);transform-origin:right">127.50</span></div>
<div class="t" style="top:129px;height:17px;line-height:17px;font-size:14px;color:#000;right:83px;"><span style="display:inline-block;transform:scaleX(0.9);transform-origin:right">1,480,962.53</span></div>
<div class="t" style="top:129px;height:17px;line-height:17px;font-size:14px;color:#000;right:12px;"><span style="display:inline-block;transform:scaleX(0.9);transform-origin:right">77.30</span></div>
<div class="t" style="top:146px;height:17px;line-height:17px;font-size:14px;color:#000;right:1057px;"><span style="display:inline-block;transform:scaleX(0.895);transform-origin:right">May-01</span></div>
<div class="t" style="top:146px;height:17px;line-height:17px;font-size:14px;color:#000;right:993px;"><span style="display:inline-block;transform:scaleX(0.9);transform-origin:right">39,521</span></div>
<div class="t" style="top:146px;height:17px;line-height:17px;font-size:14px;color:#000;right:929px;"><span style="display:inline-block;transform:scaleX(0.9);transform-origin:right">13,764</span></div>
<div class="t" style="top:146px;height:17px;line-height:17px;font-size:14px;color:#d4262c;right:865px;"><span style="display:inline-block;transform:scaleX(0.9);transform-origin:right">25,757</span></div>
<div class="t" style="top:146px;height:17px;line-height:17px;font-size:14px;color:#000;right:815px;"><span style="display:inline-block;transform:scaleX(0.9);transform-origin:right">9,152</span></div>
<div class="t" style="top:146px;height:17px;line-height:17px;font-size:14px;color:#000;right:770px;"><span style="display:inline-block;transform:scaleX(0.9);transform-origin:right">9,152</span></div>
<div class="t" style="top:146px;height:17px;line-height:17px;font-size:14px;color:#000;right:725px;"><span style="display:inline-block;transform:scaleX(0.9);transform-origin:right">0</span></div>
<div class="t" style="top:146px;height:17px;line-height:17px;font-size:14px;color:#000;right:666px;"><span style="display:inline-block;transform:scaleX(0.9);transform-origin:right">0</span></div>
<div class="t" style="top:146px;height:17px;line-height:17px;font-size:14px;color:#000;right:626px;"><span style="display:inline-block;transform:scaleX(0.9);transform-origin:right">0</span></div>
<div class="t" style="top:146px;height:17px;line-height:17px;font-size:14px;color:#000;right:562px;"><span style="display:inline-block;transform:scaleX(0.9);transform-origin:right">7,453</span></div>
<div class="t" style="top:146px;height:17px;line-height:17px;font-size:14px;color:#000;right:480px;"><span style="display:inline-block;transform:scaleX(0.9);transform-origin:right">68.01</span></div>
<div class="t" style="top:146px;height:17px;line-height:17px;font-size:14px;color:#000;right:421px;"><span style="display:inline-block;transform:scaleX(0.9);transform-origin:right">81.90</span></div>
<div class="t" style="top:146px;height:17px;line-height:17px;font-size:14px;color:#000;right:363px;"><span style="display:inline-block;transform:scaleX(0.9);transform-origin:right">144.39</span></div>
<div class="t" style="top:146px;height:17px;line-height:17px;font-size:14px;color:#c0c0c0;right:299px;"><span style="display:inline-block;transform:scaleX(0.9);transform-origin:right">91.92</span></div>
<div class="t" style="top:146px;height:17px;line-height:17px;font-size:14px;color:#c0c0c0;right:242px;"><span style="display:inline-block;transform:scaleX(0.9);transform-origin:right">103.66</span></div>
<div class="t" style="top:146px;height:17px;line-height:17px;font-size:14px;color:#000;right:178px;"><span style="display:inline-block;transform:scaleX(0.9);transform-origin:right">126.10</span></div>
<div class="t" style="top:146px;height:17px;line-height:17px;font-size:14px;color:#000;right:83px;"><span style="display:inline-block;transform:scaleX(0.9);transform-origin:right">2,311,750.94</span></div>
<div class="t" style="top:146px;height:17px;line-height:17px;font-size:14px;color:#000;right:12px;"><span style="display:inline-block;transform:scaleX(0.9);transform-origin:right">89.75</span></div>
<div class="t" style="top:163px;height:17px;line-height:17px;font-size:14px;color:#000;right:1057px;"><span style="display:inline-block;transform:scaleX(0.895);transform-origin:right">Jun-01</span></div>
<div class="t" style="top:163px;height:17px;line-height:17px;font-size:14px;color:#000;right:993px;"><span style="display:inline-block;transform:scaleX(0.9);transform-origin:right">43,447</span></div>
<div class="t" style="top:163px;height:17px;line-height:17px;font-size:14px;color:#000;right:929px;"><span style="display:inline-block;transform:scaleX(0.9);transform-origin:right">15,891</span></div>
<div class="t" style="top:163px;height:17px;line-height:17px;font-size:14px;color:#d4262c;right:865px;"><span style="display:inline-block;transform:scaleX(0.9);transform-origin:right">27,556</span></div>
<div class="t" style="top:163px;height:17px;line-height:17px;font-size:14px;color:#000;right:815px;"><span style="display:inline-block;transform:scaleX(0.9);transform-origin:right">9,152</span></div>
<div class="t" style="top:163px;height:17px;line-height:17px;font-size:14px;color:#000;right:770px;"><span style="display:inline-block;transform:scaleX(0.9);transform-origin:right">9,152</span></div>
<div class="t" style="top:163px;height:17px;line-height:17px;font-size:14px;color:#000;right:725px;"><span style="display:inline-block;transform:scaleX(0.9);transform-origin:right">0</span></div>
<div class="t" style="top:163px;height:17px;line-height:17px;font-size:14px;color:#000;right:666px;"><span style="display:inline-block;transform:scaleX(0.9);transform-origin:right">0</span></div>
<div class="t" style="top:163px;height:17px;line-height:17px;font-size:14px;color:#000;right:626px;"><span style="display:inline-block;transform:scaleX(0.9);transform-origin:right">0</span></div>
<div class="t" style="top:163px;height:17px;line-height:17px;font-size:14px;color:#000;right:562px;"><span style="display:inline-block;transform:scaleX(0.9);transform-origin:right">9,251</span></div>
<div class="t" style="top:163px;height:17px;line-height:17px;font-size:14px;color:#000;right:480px;"><span style="display:inline-block;transform:scaleX(0.9);transform-origin:right">68.01</span></div>
<div class="t" style="top:163px;height:17px;line-height:17px;font-size:14px;color:#000;right:421px;"><span style="display:inline-block;transform:scaleX(0.9);transform-origin:right">81.90</span></div>
<div class="t" style="top:163px;height:17px;line-height:17px;font-size:14px;color:#000;right:363px;"><span style="display:inline-block;transform:scaleX(0.9);transform-origin:right">144.39</span></div>
<div class="t" style="top:163px;height:17px;line-height:17px;font-size:14px;color:#c0c0c0;right:299px;"><span style="display:inline-block;transform:scaleX(0.9);transform-origin:right">91.92</span></div>
<div class="t" style="top:163px;height:17px;line-height:17px;font-size:14px;color:#c0c0c0;right:242px;"><span style="display:inline-block;transform:scaleX(0.9);transform-origin:right">103.66</span></div>
<div class="t" style="top:163px;height:17px;line-height:17px;font-size:14px;color:#000;right:178px;"><span style="display:inline-block;transform:scaleX(0.9);transform-origin:right">145.04</span></div>
<div class="t" style="top:163px;height:17px;line-height:17px;font-size:14px;color:#000;right:83px;"><span style="display:inline-block;transform:scaleX(0.9);transform-origin:right">2,713,891.59</span></div>
<div class="t" style="top:163px;height:17px;line-height:17px;font-size:14px;color:#000;right:12px;"><span style="display:inline-block;transform:scaleX(0.9);transform-origin:right">98.48</span></div>
<div class="t" style="top:203px;height:17px;line-height:17px;font-size:14px;color:#000;right:1057px;"><span style="display:inline-block;transform:scaleX(0.895);transform-origin:right">Jul-01</span></div>
<div class="t" style="top:203px;height:17px;line-height:17px;font-size:14px;color:#000;right:993px;"><span style="display:inline-block;transform:scaleX(0.9);transform-origin:right">45,574</span></div>
<div class="t" style="top:203px;height:17px;line-height:17px;font-size:14px;color:#000;right:929px;"><span style="display:inline-block;transform:scaleX(0.9);transform-origin:right">15,066</span></div>
<div class="t" style="top:203px;height:17px;line-height:17px;font-size:14px;color:#d4262c;right:865px;"><span style="display:inline-block;transform:scaleX(0.9);transform-origin:right">30,508</span></div>
<div class="t" style="top:203px;height:17px;line-height:17px;font-size:14px;color:#000;right:815px;"><span style="display:inline-block;transform:scaleX(0.9);transform-origin:right">9,152</span></div>
<div class="t" style="top:203px;height:17px;line-height:17px;font-size:14px;color:#000;right:770px;"><span style="display:inline-block;transform:scaleX(0.9);transform-origin:right">9,152</span></div>
<div class="t" style="top:203px;height:17px;line-height:17px;font-size:14px;color:#000;right:725px;"><span style="display:inline-block;transform:scaleX(0.9);transform-origin:right">0</span></div>
<div class="t" style="top:203px;height:17px;line-height:17px;font-size:14px;color:#000;right:666px;"><span style="display:inline-block;transform:scaleX(0.9);transform-origin:right">0</span></div>
<div class="t" style="top:203px;height:17px;line-height:17px;font-size:14px;color:#000;right:626px;"><span style="display:inline-block;transform:scaleX(0.9);transform-origin:right">0</span></div>
<div class="t" style="top:203px;height:17px;line-height:17px;font-size:14px;color:#000;right:562px;"><span style="display:inline-block;transform:scaleX(0.9);transform-origin:right">12,203</span></div>
<div class="t" style="top:203px;height:17px;line-height:17px;font-size:14px;color:#000;right:480px;"><span style="display:inline-block;transform:scaleX(0.9);transform-origin:right">68.01</span></div>
<div class="t" style="top:203px;height:17px;line-height:17px;font-size:14px;color:#000;right:421px;"><span style="display:inline-block;transform:scaleX(0.9);transform-origin:right">81.90</span></div>
<div class="t" style="top:203px;height:17px;line-height:17px;font-size:14px;color:#000;right:363px;"><span style="display:inline-block;transform:scaleX(0.9);transform-origin:right">144.39</span></div>
<div class="t" style="top:203px;height:17px;line-height:17px;font-size:14px;color:#c0c0c0;right:299px;"><span style="display:inline-block;transform:scaleX(0.9);transform-origin:right">91.92</span></div>
<div class="t" style="top:203px;height:17px;line-height:17px;font-size:14px;color:#c0c0c0;right:242px;"><span style="display:inline-block;transform:scaleX(0.9);transform-origin:right">103.66</span></div>
<div class="t" style="top:203px;height:17px;line-height:17px;font-size:14px;color:#000;right:178px;"><span style="display:inline-block;transform:scaleX(0.9);transform-origin:right">154.63</span></div>
<div class="t" style="top:203px;height:17px;line-height:17px;font-size:14px;color:#000;right:83px;"><span style="display:inline-block;transform:scaleX(0.9);transform-origin:right">3,259,059.91</span></div>
<div class="t" style="top:203px;height:17px;line-height:17px;font-size:14px;color:#000;right:12px;"><span style="display:inline-block;transform:scaleX(0.9);transform-origin:right">106.83</span></div>
<div class="t" style="top:220px;height:17px;line-height:17px;font-size:14px;color:#000;right:1057px;"><span style="display:inline-block;transform:scaleX(0.895);transform-origin:right">Aug-01</span></div>
<div class="t" style="top:220px;height:17px;line-height:17px;font-size:14px;color:#000;right:993px;"><span style="display:inline-block;transform:scaleX(0.9);transform-origin:right">44,661</span></div>
<div class="t" style="top:220px;height:17px;line-height:17px;font-size:14px;color:#000;right:929px;"><span style="display:inline-block;transform:scaleX(0.9);transform-origin:right">14,571</span></div>
<div class="t" style="top:220px;height:17px;line-height:17px;font-size:14px;color:#d4262c;right:865px;"><span style="display:inline-block;transform:scaleX(0.9);transform-origin:right">30,090</span></div>
<div class="t" style="top:220px;height:17px;line-height:17px;font-size:14px;color:#000;right:815px;"><span style="display:inline-block;transform:scaleX(0.9);transform-origin:right">9,152</span></div>
<div class="t" style="top:220px;height:17px;line-height:17px;font-size:14px;color:#000;right:770px;"><span style="display:inline-block;transform:scaleX(0.9);transform-origin:right">9,152</span></div>
<div class="t" style="top:220px;height:17px;line-height:17px;font-size:14px;color:#000;right:725px;"><span style="display:inline-block;transform:scaleX(0.9);transform-origin:right">0</span></div>
<div class="t" style="top:220px;height:17px;line-height:17px;font-size:14px;color:#000;right:666px;"><span style="display:inline-block;transform:scaleX(0.9);transform-origin:right">0</span></div>
<div class="t" style="top:220px;height:17px;line-height:17px;font-size:14px;color:#000;right:626px;"><span style="display:inline-block;transform:scaleX(0.9);transform-origin:right">0</span></div>
<div class="t" style="top:220px;height:17px;line-height:17px;font-size:14px;color:#000;right:562px;"><span style="display:inline-block;transform:scaleX(0.9);transform-origin:right">11,785</span></div>
<div class="t" style="top:220px;height:17px;line-height:17px;font-size:14px;color:#000;right:480px;"><span style="display:inline-block;transform:scaleX(0.9);transform-origin:right">68.01</span></div>
<div class="t" style="top:220px;height:17px;line-height:17px;font-size:14px;color:#000;right:421px;"><span style="display:inline-block;transform:scaleX(0.9);transform-origin:right">81.90</span></div>
<div class="t" style="top:220px;height:17px;line-height:17px;font-size:14px;color:#000;right:363px;"><span style="display:inline-block;transform:scaleX(0.9);transform-origin:right">144.39</span></div>
<div class="t" style="top:220px;height:17px;line-height:17px;font-size:14px;color:#c0c0c0;right:299px;"><span style="display:inline-block;transform:scaleX(0.9);transform-origin:right">91.92</span></div>
<div class="t" style="top:220px;height:17px;line-height:17px;font-size:14px;color:#c0c0c0;right:242px;"><span style="display:inline-block;transform:scaleX(0.9);transform-origin:right">103.66</span></div>
<div class="t" style="top:220px;height:17px;line-height:17px;font-size:14px;color:#000;right:178px;"><span style="display:inline-block;transform:scaleX(0.9);transform-origin:right">168.81</span></div>
<div class="t" style="top:220px;height:17px;line-height:17px;font-size:14px;color:#000;right:83px;"><span style="display:inline-block;transform:scaleX(0.9);transform-origin:right">3,361,464.34</span></div>
<div class="t" style="top:220px;height:17px;line-height:17px;font-size:14px;color:#000;right:12px;"><span style="display:inline-block;transform:scaleX(0.9);transform-origin:right">111.71</span></div>
<div class="t" style="top:237px;height:17px;line-height:17px;font-size:14px;color:#000;right:1057px;"><span style="display:inline-block;transform:scaleX(0.895);transform-origin:right">Sep-01</span></div>
<div class="t" style="top:237px;height:17px;line-height:17px;font-size:14px;color:#000;right:993px;"><span style="display:inline-block;transform:scaleX(0.9);transform-origin:right">44,243</span></div>
<div class="t" style="top:237px;height:17px;line-height:17px;font-size:14px;color:#000;right:929px;"><span style="display:inline-block;transform:scaleX(0.9);transform-origin:right">14,752</span></div>
<div class="t" style="top:237px;height:17px;line-height:17px;font-size:14px;color:#d4262c;right:865px;"><span style="display:inline-block;transform:scaleX(0.9);transform-origin:right">29,491</span></div>
<div class="t" style="top:237px;height:17px;line-height:17px;font-size:14px;color:#000;right:815px;"><span style="display:inline-block;transform:scaleX(0.9);transform-origin:right">9,152</span></div>
<div class="t" style="top:237px;height:17px;line-height:17px;font-size:14px;color:#000;right:770px;"><span style="display:inline-block;transform:scaleX(0.9);transform-origin:right">9,152</span></div>
<div class="t" style="top:237px;height:17px;line-height:17px;font-size:14px;color:#000;right:725px;"><span style="display:inline-block;transform:scaleX(0.9);transform-origin:right">0</span></div>
<div class="t" style="top:237px;height:17px;line-height:17px;font-size:14px;color:#000;right:666px;"><span style="display:inline-block;transform:scaleX(0.9);transform-origin:right">0</span></div>
<div class="t" style="top:237px;height:17px;line-height:17px;font-size:14px;color:#000;right:626px;"><span style="display:inline-block;transform:scaleX(0.9);transform-origin:right">0</span></div>
<div class="t" style="top:237px;height:17px;line-height:17px;font-size:14px;color:#000;right:562px;"><span style="display:inline-block;transform:scaleX(0.9);transform-origin:right">11,186</span></div>
<div class="t" style="top:237px;height:17px;line-height:17px;font-size:14px;color:#000;right:480px;"><span style="display:inline-block;transform:scaleX(0.9);transform-origin:right">68.01</span></div>
<div class="t" style="top:237px;height:17px;line-height:17px;font-size:14px;color:#000;right:421px;"><span style="display:inline-block;transform:scaleX(0.9);transform-origin:right">81.90</span></div>
<div class="t" style="top:237px;height:17px;line-height:17px;font-size:14px;color:#000;right:363px;"><span style="display:inline-block;transform:scaleX(0.9);transform-origin:right">144.39</span></div>
<div class="t" style="top:237px;height:17px;line-height:17px;font-size:14px;color:#c0c0c0;right:299px;"><span style="display:inline-block;transform:scaleX(0.9);transform-origin:right">91.92</span></div>
<div class="t" style="top:237px;height:17px;line-height:17px;font-size:14px;color:#c0c0c0;right:242px;"><span style="display:inline-block;transform:scaleX(0.9);transform-origin:right">103.66</span></div>
<div class="t" style="top:237px;height:17px;line-height:17px;font-size:14px;color:#000;right:178px;"><span style="display:inline-block;transform:scaleX(0.9);transform-origin:right">155.63</span></div>
<div class="t" style="top:237px;height:17px;line-height:17px;font-size:14px;color:#000;right:83px;"><span style="display:inline-block;transform:scaleX(0.9);transform-origin:right">3,112,896.78</span></div>
<div class="t" style="top:237px;height:17px;line-height:17px;font-size:14px;color:#000;right:12px;"><span style="display:inline-block;transform:scaleX(0.9);transform-origin:right">105.56</span></div>
<div class="t" style="top:254px;height:17px;line-height:17px;font-size:14px;color:#000;right:1057px;"><span style="display:inline-block;transform:scaleX(0.895);transform-origin:right">Oct-01</span></div>
<div class="t" style="top:254px;height:17px;line-height:17px;font-size:14px;color:#000;right:993px;"><span style="display:inline-block;transform:scaleX(0.9);transform-origin:right">36,692</span></div>
<div class="t" style="top:254px;height:17px;line-height:17px;font-size:14px;color:#000;right:929px;"><span style="display:inline-block;transform:scaleX(0.9);transform-origin:right">12,802</span></div>
<div class="t" style="top:254px;height:17px;line-height:17px;font-size:14px;color:#d4262c;right:865px;"><span style="display:inline-block;transform:scaleX(0.9);transform-origin:right">23,890</span></div>
<div class="t" style="top:254px;height:17px;line-height:17px;font-size:14px;color:#000;right:815px;"><span style="display:inline-block;transform:scaleX(0.9);transform-origin:right">9,152</span></div>
<div class="t" style="top:254px;height:17px;line-height:17px;font-size:14px;color:#000;right:770px;"><span style="display:inline-block;transform:scaleX(0.9);transform-origin:right">9,152</span></div>
<div class="t" style="top:254px;height:17px;line-height:17px;font-size:14px;color:#000;right:725px;"><span style="display:inline-block;transform:scaleX(0.9);transform-origin:right">0</span></div>
<div class="t" style="top:254px;height:17px;line-height:17px;font-size:14px;color:#000;right:666px;"><span style="display:inline-block;transform:scaleX(0.9);transform-origin:right">0</span></div>
<div class="t" style="top:254px;height:17px;line-height:17px;font-size:14px;color:#000;right:626px;"><span style="display:inline-block;transform:scaleX(0.9);transform-origin:right">0</span></div>
<div class="t" style="top:254px;height:17px;line-height:17px;font-size:14px;color:#000;right:562px;"><span style="display:inline-block;transform:scaleX(0.9);transform-origin:right">5,585</span></div>
<div class="t" style="top:254px;height:17px;line-height:17px;font-size:14px;color:#000;right:480px;"><span style="display:inline-block;transform:scaleX(0.9);transform-origin:right">68.01</span></div>
<div class="t" style="top:254px;height:17px;line-height:17px;font-size:14px;color:#000;right:421px;"><span style="display:inline-block;transform:scaleX(0.9);transform-origin:right">81.90</span></div>
<div class="t" style="top:254px;height:17px;line-height:17px;font-size:14px;color:#000;right:363px;"><span style="display:inline-block;transform:scaleX(0.9);transform-origin:right">144.39</span></div>
<div class="t" style="top:254px;height:17px;line-height:17px;font-size:14px;color:#c0c0c0;right:299px;"><span style="display:inline-block;transform:scaleX(0.9);transform-origin:right">91.92</span></div>
<div class="t" style="top:254px;height:17px;line-height:17px;font-size:14px;color:#c0c0c0;right:242px;"><span style="display:inline-block;transform:scaleX(0.9);transform-origin:right">103.66</span></div>
<div class="t" style="top:254px;height:17px;line-height:17px;font-size:14px;color:#000;right:178px;"><span style="display:inline-block;transform:scaleX(0.9);transform-origin:right">104.90</span></div>
<div class="t" style="top:254px;height:17px;line-height:17px;font-size:14px;color:#000;right:83px;"><span style="display:inline-block;transform:scaleX(0.9);transform-origin:right">1,957,876.55</span></div>
<div class="t" style="top:254px;height:17px;line-height:17px;font-size:14px;color:#000;right:12px;"><span style="display:inline-block;transform:scaleX(0.9);transform-origin:right">81.95</span></div>
<div class="t" style="top:271px;height:17px;line-height:17px;font-size:14px;color:#000;right:1057px;"><span style="display:inline-block;transform:scaleX(0.895);transform-origin:right">Nov-01</span></div>
<div class="t" style="top:271px;height:17px;line-height:17px;font-size:14px;color:#000;right:993px;"><span style="display:inline-block;transform:scaleX(0.9);transform-origin:right">33,180</span></div>
<div class="t" style="top:271px;height:17px;line-height:17px;font-size:14px;color:#000;right:929px;"><span style="display:inline-block;transform:scaleX(0.9);transform-origin:right">13,373</span></div>
<div class="t" style="top:271px;height:17px;line-height:17px;font-size:14px;color:#d4262c;right:865px;"><span style="display:inline-block;transform:scaleX(0.9);transform-origin:right">19,807</span></div>
<div class="t" style="top:271px;height:17px;line-height:17px;font-size:14px;color:#000;right:815px;"><span style="display:inline-block;transform:scaleX(0.9);transform-origin:right">9,152</span></div>
<div class="t" style="top:271px;height:17px;line-height:17px;font-size:14px;color:#000;right:770px;"><span style="display:inline-block;transform:scaleX(0.9);transform-origin:right">9,152</span></div>
<div class="t" style="top:271px;height:17px;line-height:17px;font-size:14px;color:#000;right:725px;"><span style="display:inline-block;transform:scaleX(0.9);transform-origin:right">0</span></div>
<div class="t" style="top:271px;height:17px;line-height:17px;font-size:14px;color:#000;right:666px;"><span style="display:inline-block;transform:scaleX(0.9);transform-origin:right">0</span></div>
<div class="t" style="top:271px;height:17px;line-height:17px;font-size:14px;color:#000;right:626px;"><span style="display:inline-block;transform:scaleX(0.9);transform-origin:right">0</span></div>
<div class="t" style="top:271px;height:17px;line-height:17px;font-size:14px;color:#000;right:562px;"><span style="display:inline-block;transform:scaleX(0.9);transform-origin:right">1,502</span></div>
<div class="t" style="top:271px;height:17px;line-height:17px;font-size:14px;color:#000;right:480px;"><span style="display:inline-block;transform:scaleX(0.9);transform-origin:right">68.01</span></div>
<div class="t" style="top:271px;height:17px;line-height:17px;font-size:14px;color:#000;right:421px;"><span style="display:inline-block;transform:scaleX(0.9);transform-origin:right">81.90</span></div>
<div class="t" style="top:271px;height:17px;line-height:17px;font-size:14px;color:#000;right:363px;"><span style="display:inline-block;transform:scaleX(0.9);transform-origin:right">144.39</span></div>
<div class="t" style="top:271px;height:17px;line-height:17px;font-size:14px;color:#c0c0c0;right:299px;"><span style="display:inline-block;transform:scaleX(0.9);transform-origin:right">91.92</span></div>
<div class="t" style="top:271px;height:17px;line-height:17px;font-size:14px;color:#c0c0c0;right:242px;"><span style="display:inline-block;transform:scaleX(0.9);transform-origin:right">103.66</span></div>
<div class="t" style="top:271px;height:17px;line-height:17px;font-size:14px;color:#000;right:178px;"><span style="display:inline-block;transform:scaleX(0.9);transform-origin:right">101.11</span></div>
<div class="t" style="top:271px;height:17px;line-height:17px;font-size:14px;color:#000;right:83px;"><span style="display:inline-block;transform:scaleX(0.9);transform-origin:right">1,523,926.48</span></div>
<div class="t" style="top:271px;height:17px;line-height:17px;font-size:14px;color:#000;right:12px;"><span style="display:inline-block;transform:scaleX(0.9);transform-origin:right">76.94</span></div>
<div class="t" style="top:288px;height:17px;line-height:17px;font-size:14px;color:#000;right:1057px;"><span style="display:inline-block;transform:scaleX(0.895);transform-origin:right">Dec-01</span></div>
<div class="t" style="top:288px;height:17px;line-height:17px;font-size:14px;color:#000;right:993px;"><span style="display:inline-block;transform:scaleX(0.9);transform-origin:right">34,319</span></div>
<div class="t" style="top:288px;height:17px;line-height:17px;font-size:14px;color:#000;right:929px;"><span style="display:inline-block;transform:scaleX(0.9);transform-origin:right">13,178</span></div>
<div class="t" style="top:288px;height:17px;line-height:17px;font-size:14px;color:#d4262c;right:865px;"><span style="display:inline-block;transform:scaleX(0.9);transform-origin:right">21,141</span></div>
<div class="t" style="top:288px;height:17px;line-height:17px;font-size:14px;color:#000;right:815px;"><span style="display:inline-block;transform:scaleX(0.9);transform-origin:right">9,152</span></div>
<div class="t" style="top:288px;height:17px;line-height:17px;font-size:14px;color:#000;right:770px;"><span style="display:inline-block;transform:scaleX(0.9);transform-origin:right">9,152</span></div>
<div class="t" style="top:288px;height:17px;line-height:17px;font-size:14px;color:#000;right:725px;"><span style="display:inline-block;transform:scaleX(0.9);transform-origin:right">0</span></div>
<div class="t" style="top:288px;height:17px;line-height:17px;font-size:14px;color:#000;right:666px;"><span style="display:inline-block;transform:scaleX(0.9);transform-origin:right">0</span></div>
<div class="t" style="top:288px;height:17px;line-height:17px;font-size:14px;color:#000;right:626px;"><span style="display:inline-block;transform:scaleX(0.9);transform-origin:right">0</span></div>
<div class="t" style="top:288px;height:17px;line-height:17px;font-size:14px;color:#000;right:562px;"><span style="display:inline-block;transform:scaleX(0.9);transform-origin:right">2,836</span></div>
<div class="t" style="top:288px;height:17px;line-height:17px;font-size:14px;color:#000;right:480px;"><span style="display:inline-block;transform:scaleX(0.9);transform-origin:right">68.01</span></div>
<div class="t" style="top:288px;height:17px;line-height:17px;font-size:14px;color:#000;right:421px;"><span style="display:inline-block;transform:scaleX(0.9);transform-origin:right">81.90</span></div>
<div class="t" style="top:288px;height:17px;line-height:17px;font-size:14px;color:#000;right:363px;"><span style="display:inline-block;transform:scaleX(0.9);transform-origin:right">144.39</span></div>
<div class="t" style="top:288px;height:17px;line-height:17px;font-size:14px;color:#c0c0c0;right:299px;"><span style="display:inline-block;transform:scaleX(0.9);transform-origin:right">91.92</span></div>
<div class="t" style="top:288px;height:17px;line-height:17px;font-size:14px;color:#c0c0c0;right:242px;"><span style="display:inline-block;transform:scaleX(0.9);transform-origin:right">103.66</span></div>
<div class="t" style="top:288px;height:17px;line-height:17px;font-size:14px;color:#000;right:178px;"><span style="display:inline-block;transform:scaleX(0.9);transform-origin:right">100.01</span></div>
<div class="t" style="top:288px;height:17px;line-height:17px;font-size:14px;color:#000;right:83px;"><span style="display:inline-block;transform:scaleX(0.9);transform-origin:right">1,655,671.68</span></div>
<div class="t" style="top:288px;height:17px;line-height:17px;font-size:14px;color:#000;right:12px;"><span style="display:inline-block;transform:scaleX(0.9);transform-origin:right">78.31</span></div>
<div class="t" style="top:305px;height:17px;line-height:17px;font-size:14px;color:#000;right:1057px;"><span style="display:inline-block;transform:scaleX(0.895);transform-origin:right">Jan-02</span></div>
<div class="t" style="top:305px;height:17px;line-height:17px;font-size:14px;color:#000;right:993px;"><span style="display:inline-block;transform:scaleX(0.9);transform-origin:right">32,675</span></div>
<div class="t" style="top:305px;height:17px;line-height:17px;font-size:14px;color:#000;right:929px;"><span style="display:inline-block;transform:scaleX(0.9);transform-origin:right">12,833</span></div>
<div class="t" style="top:305px;height:17px;line-height:17px;font-size:14px;color:#d4262c;right:865px;"><span style="display:inline-block;transform:scaleX(0.9);transform-origin:right">19,842</span></div>
<div class="t" style="top:305px;height:17px;line-height:17px;font-size:14px;color:#000;right:815px;"><span style="display:inline-block;transform:scaleX(0.9);transform-origin:right">9,152</span></div>
<div class="t" style="top:305px;height:17px;line-height:17px;font-size:14px;color:#000;right:770px;"><span style="display:inline-block;transform:scaleX(0.9);transform-origin:right">9,152</span></div>
<div class="t" style="top:305px;height:17px;line-height:17px;font-size:14px;color:#000;right:725px;"><span style="display:inline-block;transform:scaleX(0.9);transform-origin:right">0</span></div>
<div class="t" style="top:305px;height:17px;line-height:17px;font-size:14px;color:#000;right:666px;"><span style="display:inline-block;transform:scaleX(0.9);transform-origin:right">0</span></div>
<div class="t" style="top:305px;height:17px;line-height:17px;font-size:14px;color:#000;right:626px;"><span style="display:inline-block;transform:scaleX(0.9);transform-origin:right">0</span></div>
<div class="t" style="top:305px;height:17px;line-height:17px;font-size:14px;color:#000;right:562px;"><span style="display:inline-block;transform:scaleX(0.9);transform-origin:right">1,537</span></div>
<div class="t" style="top:305px;height:17px;line-height:17px;font-size:14px;color:#000;right:480px;"><span style="display:inline-block;transform:scaleX(0.9);transform-origin:right">68.01</span></div>
<div class="t" style="top:305px;height:17px;line-height:17px;font-size:14px;color:#000;right:421px;"><span style="display:inline-block;transform:scaleX(0.9);transform-origin:right">81.90</span></div>
<div class="t" style="top:305px;height:17px;line-height:17px;font-size:14px;color:#000;right:363px;"><span style="display:inline-block;transform:scaleX(0.9);transform-origin:right">83.19</span></div>
<div class="t" style="top:305px;height:17px;line-height:17px;font-size:14px;color:#c0c0c0;right:299px;"><span style="display:inline-block;transform:scaleX(0.9);transform-origin:right">91.92</span></div>
<div class="t" style="top:305px;height:17px;line-height:17px;font-size:14px;color:#c0c0c0;right:242px;"><span style="display:inline-block;transform:scaleX(0.9);transform-origin:right">103.66</span></div>
<div class="t" style="top:305px;height:17px;line-height:17px;font-size:14px;color:#000;right:178px;"><span style="display:inline-block;transform:scaleX(0.9);transform-origin:right">82.94</span></div>
<div class="t" style="top:305px;height:17px;line-height:17px;font-size:14px;color:#000;right:83px;"><span style="display:inline-block;transform:scaleX(0.9);transform-origin:right">1,499,498.98</span></div>
<div class="t" style="top:305px;height:17px;line-height:17px;font-size:14px;color:#000;right:12px;"><span style="display:inline-block;transform:scaleX(0.9);transform-origin:right">75.57</span></div>
<div class="t" style="top:322px;height:17px;line-height:17px;font-size:14px;color:#000;right:1057px;"><span style="display:inline-block;transform:scaleX(0.895);transform-origin:right">Feb-02</span></div>
<div class="t" style="top:322px;height:17px;line-height:17px;font-size:14px;color:#000;right:993px;"><span style="display:inline-block;transform:scaleX(0.9);transform-origin:right">32,071</span></div>
<div class="t" style="top:322px;height:17px;line-height:17px;font-size:14px;color:#000;right:929px;"><span style="display:inline-block;transform:scaleX(0.9);transform-origin:right">13,417</span></div>
<div class="t" style="top:322px;height:17px;line-height:17px;font-size:14px;color:#d4262c;right:865px;"><span style="display:inline-block;transform:scaleX(0.9);transform-origin:right">18,654</span></div>
<div class="t" style="top:322px;height:17px;line-height:17px;font-size:14px;color:#000;right:815px;"><span style="display:inline-block;transform:scaleX(0.9);transform-origin:right">9,152</span></div>
<div class="t" style="top:322px;height:17px;line-height:17px;font-size:14px;color:#000;right:770px;"><span style="display:inline-block;transform:scaleX(0.9);transform-origin:right">9,152</span></div>
<div class="t" style="top:322px;height:17px;line-height:17px;font-size:14px;color:#000;right:725px;"><span style="display:inline-block;transform:scaleX(0.9);transform-origin:right">0</span></div>
<div class="t" style="top:322px;height:17px;line-height:17px;font-size:14px;color:#000;right:666px;"><span style="display:inline-block;transform:scaleX(0.9);transform-origin:right">0</span></div>
<div class="t" style="top:322px;height:17px;line-height:17px;font-size:14px;color:#000;right:626px;"><span style="display:inline-block;transform:scaleX(0.9);transform-origin:right">0</span></div>
<div class="t" style="top:322px;height:17px;line-height:17px;font-size:14px;color:#000;right:562px;"><span style="display:inline-block;transform:scaleX(0.9);transform-origin:right">349</span></div>
<div class="t" style="top:322px;height:17px;line-height:17px;font-size:14px;color:#000;right:480px;"><span style="display:inline-block;transform:scaleX(0.9);transform-origin:right">68.01</span></div>
<div class="t" style="top:322px;height:17px;line-height:17px;font-size:14px;color:#000;right:421px;"><span style="display:inline-block;transform:scaleX(0.9);transform-origin:right">81.90</span></div>
<div class="t" style="top:322px;height:17px;line-height:17px;font-size:14px;color:#000;right:363px;"><span style="display:inline-block;transform:scaleX(0.9);transform-origin:right">83.19</span></div>
<div class="t" style="top:322px;height:17px;line-height:17px;font-size:14px;color:#c0c0c0;right:299px;"><span style="display:inline-block;transform:scaleX(0.9);transform-origin:right">91.92</span></div>
<div class="t" style="top:322px;height:17px;line-height:17px;font-size:14px;color:#c0c0c0;right:242px;"><span style="display:inline-block;transform:scaleX(0.9);transform-origin:right">103.66</span></div>
<div class="t" style="top:322px;height:17px;line-height:17px;font-size:14px;color:#000;right:178px;"><span style="display:inline-block;transform:scaleX(0.9);transform-origin:right">75.50</span></div>
<div class="t" style="top:322px;height:17px;line-height:17px;font-size:14px;color:#000;right:83px;"><span style="display:inline-block;transform:scaleX(0.9);transform-origin:right">1,398,343.28</span></div>
<div class="t" style="top:322px;height:17px;line-height:17px;font-size:14px;color:#000;right:12px;"><span style="display:inline-block;transform:scaleX(0.9);transform-origin:right">74.96</span></div>
<div class="t" style="top:339px;height:17px;line-height:17px;font-size:14px;color:#000;right:1057px;"><span style="display:inline-block;transform:scaleX(0.895);transform-origin:right">Mar-02</span></div>
<div class="t" style="top:339px;height:17px;line-height:17px;font-size:14px;color:#000;right:993px;"><span style="display:inline-block;transform:scaleX(0.9);transform-origin:right">32,340</span></div>
<div class="t" style="top:339px;height:17px;line-height:17px;font-size:14px;color:#000;right:929px;"><span style="display:inline-block;transform:scaleX(0.9);transform-origin:right">13,638</span></div>
<div class="t" style="top:339px;height:17px;line-height:17px;font-size:14px;color:#d4262c;right:865px;"><span style="display:inline-block;transform:scaleX(0.9);transform-origin:right">18,702</span></div>
<div class="t" style="top:339px;height:17px;line-height:17px;font-size:14px;color:#000;right:815px;"><span style="display:inline-block;transform:scaleX(0.9);transform-origin:right">9,152</span></div>
<div class="t" style="top:339px;height:17px;line-height:17px;font-size:14px;color:#000;right:770px;"><span style="display:inline-block;transform:scaleX(0.9);transform-origin:right">9,152</span></div>
<div class="t" style="top:339px;height:17px;line-height:17px;font-size:14px;color:#000;right:725px;"><span style="display:inline-block;transform:scaleX(0.9);transform-origin:right">0</span></div>
<div class="t" style="top:339px;height:17px;line-height:17px;font-size:14px;color:#000;right:666px;"><span style="display:inline-block;transform:scaleX(0.9);transform-origin:right">0</span></div>
<div class="t" style="top:339px;height:17px;line-height:17px;font-size:14px;color:#000;right:626px;"><span style="display:inline-block;transform:scaleX(0.9);transform-origin:right">0</span></div>
<div class="t" style="top:339px;height:17px;line-height:17px;font-size:14px;color:#000;right:562px;"><span style="display:inline-block;transform:scaleX(0.9);transform-origin:right">397</span></div>
<div class="t" style="top:339px;height:17px;line-height:17px;font-size:14px;color:#000;right:480px;"><span style="display:inline-block;transform:scaleX(0.9);transform-origin:right">68.01</span></div>
<div class="t" style="top:339px;height:17px;line-height:17px;font-size:14px;color:#000;right:421px;"><span style="display:inline-block;transform:scaleX(0.9);transform-origin:right">81.90</span></div>
<div class="t" style="top:339px;height:17px;line-height:17px;font-size:14px;color:#000;right:363px;"><span style="display:inline-block;transform:scaleX(0.9);transform-origin:right">83.19</span></div>
<div class="t" style="top:339px;height:17px;line-height:17px;font-size:14px;color:#c0c0c0;right:299px;"><span style="display:inline-block;transform:scaleX(0.9);transform-origin:right">91.92</span></div>
<div class="t" style="top:339px;height:17px;line-height:17px;font-size:14px;color:#c0c0c0;right:242px;"><span style="display:inline-block;transform:scaleX(0.9);transform-origin:right">103.66</span></div>
<div class="t" style="top:339px;height:17px;line-height:17px;font-size:14px;color:#000;right:178px;"><span style="display:inline-block;transform:scaleX(0.9);transform-origin:right">70.94</span></div>
<div class="t" style="top:339px;height:17px;line-height:17px;font-size:14px;color:#000;right:83px;"><span style="display:inline-block;transform:scaleX(0.9);transform-origin:right">1,400,154.58</span></div>
<div class="t" style="top:339px;height:17px;line-height:17px;font-size:14px;color:#000;right:12px;"><span style="display:inline-block;transform:scaleX(0.9);transform-origin:right">74.87</span></div>
<div class="t" style="top:356px;height:17px;line-height:17px;font-size:14px;color:#000;right:1057px;"><span style="display:inline-block;transform:scaleX(0.895);transform-origin:right">Apr-02</span></div>
<div class="t" style="top:356px;height:17px;line-height:17px;font-size:14px;color:#000;right:993px;"><span style="display:inline-block;transform:scaleX(0.9);transform-origin:right">33,013</span></div>
<div class="t" style="top:356px;height:17px;line-height:17px;font-size:14px;color:#000;right:929px;"><span style="display:inline-block;transform:scaleX(0.9);transform-origin:right">13,854</span></div>
<div class="t" style="top:356px;height:17px;line-height:17px;font-size:14px;color:#d4262c;right:865px;"><span style="display:inline-block;transform:scaleX(0.9);transform-origin:right">19,159</span></div>
<div class="t" style="top:356px;height:17px;line-height:17px;font-size:14px;color:#000;right:815px;"><span style="display:inline-block;transform:scaleX(0.9);transform-origin:right">9,152</span></div>
<div class="t" style="top:356px;height:17px;line-height:17px;font-size:14px;color:#000;right:770px;"><span style="display:inline-block;transform:scaleX(0.9);transform-origin:right">9,152</span></div>
<div class="t" style="top:356px;height:17px;line-height:17px;font-size:14px;color:#000;right:725px;"><span style="display:inline-block;transform:scaleX(0.9);transform-origin:right">0</span></div>
<div class="t" style="top:356px;height:17px;line-height:17px;font-size:14px;color:#000;right:666px;"><span style="display:inline-block;transform:scaleX(0.9);transform-origin:right">0</span></div>
<div class="t" style="top:356px;height:17px;line-height:17px;font-size:14px;color:#000;right:626px;"><span style="display:inline-block;transform:scaleX(0.9);transform-origin:right">0</span></div>
<div class="t" style="top:356px;height:17px;line-height:17px;font-size:14px;color:#000;right:562px;"><span style="display:inline-block;transform:scaleX(0.9);transform-origin:right">854</span></div>
<div class="t" style="top:356px;height:17px;line-height:17px;font-size:14px;color:#000;right:480px;"><span style="display:inline-block;transform:scaleX(0.9);transform-origin:right">68.01</span></div>
<div class="t" style="top:356px;height:17px;line-height:17px;font-size:14px;color:#000;right:421px;"><span style="display:inline-block;transform:scaleX(0.9);transform-origin:right">81.90</span></div>
<div class="t" style="top:356px;height:17px;line-height:17px;font-size:14px;color:#000;right:363px;"><span style="display:inline-block;transform:scaleX(0.9);transform-origin:right">83.19</span></div>
<div class="t" style="top:356px;height:17px;line-height:17px;font-size:14px;color:#c0c0c0;right:299px;"><span style="display:inline-block;transform:scaleX(0.9);transform-origin:right">91.92</span></div>
<div class="t" style="top:356px;height:17px;line-height:17px;font-size:14px;color:#c0c0c0;right:242px;"><span style="display:inline-block;transform:scaleX(0.9);transform-origin:right">103.66</span></div>
<div class="t" style="top:356px;height:17px;line-height:17px;font-size:14px;color:#000;right:178px;"><span style="display:inline-block;transform:scaleX(0.9);transform-origin:right">69.23</span></div>
<div class="t" style="top:356px;height:17px;line-height:17px;font-size:14px;color:#000;right:83px;"><span style="display:inline-block;transform:scaleX(0.9);transform-origin:right">1,431,173.74</span></div>
<div class="t" style="top:356px;height:17px;line-height:17px;font-size:14px;color:#000;right:12px;"><span style="display:inline-block;transform:scaleX(0.9);transform-origin:right">74.70</span></div>
<div class="t" style="top:373px;height:17px;line-height:17px;font-size:14px;color:#000;right:1057px;"><span style="display:inline-block;transform:scaleX(0.895);transform-origin:right">May-02</span></div>
<div class="t" style="top:373px;height:17px;line-height:17px;font-size:14px;color:#000;right:993px;"><span style="display:inline-block;transform:scaleX(0.9);transform-origin:right">39,521</span></div>
<div class="t" style="top:373px;height:17px;line-height:17px;font-size:14px;color:#000;right:929px;"><span style="display:inline-block;transform:scaleX(0.9);transform-origin:right">13,764</span></div>
<div class="t" style="top:373px;height:17px;line-height:17px;font-size:14px;color:#d4262c;right:865px;"><span style="display:inline-block;transform:scaleX(0.9);transform-origin:right">25,757</span></div>
<div class="t" style="top:373px;height:17px;line-height:17px;font-size:14px;color:#000;right:815px;"><span style="display:inline-block;transform:scaleX(0.9);transform-origin:right">9,152</span></div>
<div class="t" style="top:373px;height:17px;line-height:17px;font-size:14px;color:#000;right:770px;"><span style="display:inline-block;transform:scaleX(0.9);transform-origin:right">9,152</span></div>
<div class="t" style="top:373px;height:17px;line-height:17px;font-size:14px;color:#000;right:725px;"><span style="display:inline-block;transform:scaleX(0.9);transform-origin:right">0</span></div>
<div class="t" style="top:373px;height:17px;line-height:17px;font-size:14px;color:#000;right:666px;"><span style="display:inline-block;transform:scaleX(0.9);transform-origin:right">0</span></div>
<div class="t" style="top:373px;height:17px;line-height:17px;font-size:14px;color:#000;right:626px;"><span style="display:inline-block;transform:scaleX(0.9);transform-origin:right">0</span></div>
<div class="t" style="top:373px;height:17px;line-height:17px;font-size:14px;color:#000;right:562px;"><span style="display:inline-block;transform:scaleX(0.9);transform-origin:right">7,453</span></div>
<div class="t" style="top:373px;height:17px;line-height:17px;font-size:14px;color:#000;right:480px;"><span style="display:inline-block;transform:scaleX(0.9);transform-origin:right">68.01</span></div>
<div class="t" style="top:373px;height:17px;line-height:17px;font-size:14px;color:#000;right:421px;"><span style="display:inline-block;transform:scaleX(0.9);transform-origin:right">81.90</span></div>
<div class="t" style="top:373px;height:17px;line-height:17px;font-size:14px;color:#000;right:363px;"><span style="display:inline-block;transform:scaleX(0.9);transform-origin:right">83.19</span></div>
<div class="t" style="top:373px;height:17px;line-height:17px;font-size:14px;color:#c0c0c0;right:299px;"><span style="display:inline-block;transform:scaleX(0.9);transform-origin:right">91.92</span></div>
<div class="t" style="top:373px;height:17px;line-height:17px;font-size:14px;color:#c0c0c0;right:242px;"><span style="display:inline-block;transform:scaleX(0.9);transform-origin:right">103.66</span></div>
<div class="t" style="top:373px;height:17px;line-height:17px;font-size:14px;color:#000;right:178px;"><span style="display:inline-block;transform:scaleX(0.9);transform-origin:right">69.32</span></div>
<div class="t" style="top:373px;height:17px;line-height:17px;font-size:14px;color:#000;right:83px;"><span style="display:inline-block;transform:scaleX(0.9);transform-origin:right">1,888,600.84</span></div>
<div class="t" style="top:373px;height:17px;line-height:17px;font-size:14px;color:#000;right:12px;"><span style="display:inline-block;transform:scaleX(0.9);transform-origin:right">73.32</span></div>
<div class="t" style="top:390px;height:17px;line-height:17px;font-size:14px;color:#000;right:1057px;"><span style="display:inline-block;transform:scaleX(0.895);transform-origin:right">Jun-02</span></div>
<div class="t" style="top:390px;height:17px;line-height:17px;font-size:14px;color:#000;right:993px;"><span style="display:inline-block;transform:scaleX(0.9);transform-origin:right">43,447</span></div>
<div class="t" style="top:390px;height:17px;line-height:17px;font-size:14px;color:#000;right:929px;"><span style="display:inline-block;transform:scaleX(0.9);transform-origin:right">15,891</span></div>
<div class="t" style="top:390px;height:17px;line-height:17px;font-size:14px;color:#d4262c;right:865px;"><span style="display:inline-block;transform:scaleX(0.9);transform-origin:right">27,556</span></div>
<div class="t" style="top:390px;height:17px;line-height:17px;font-size:14px;color:#000;right:815px;"><span style="display:inline-block;transform:scaleX(0.9);transform-origin:right">9,152</span></div>
<div class="t" style="top:390px;height:17px;line-height:17px;font-size:14px;color:#000;right:770px;"><span style="display:inline-block;transform:scaleX(0.9);transform-origin:right">9,152</span></div>
<div class="t" style="top:390px;height:17px;line-height:17px;font-size:14px;color:#000;right:725px;"><span style="display:inline-block;transform:scaleX(0.9);transform-origin:right">0</span></div>
<div class="t" style="top:390px;height:17px;line-height:17px;font-size:14px;color:#000;right:666px;"><span style="display:inline-block;transform:scaleX(0.9);transform-origin:right">0</span></div>
<div class="t" style="top:390px;height:17px;line-height:17px;font-size:14px;color:#000;right:626px;"><span style="display:inline-block;transform:scaleX(0.9);transform-origin:right">0</span></div>
<div class="t" style="top:390px;height:17px;line-height:17px;font-size:14px;color:#000;right:562px;"><span style="display:inline-block;transform:scaleX(0.9);transform-origin:right">9,251</span></div>
<div class="t" style="top:390px;height:17px;line-height:17px;font-size:14px;color:#000;right:480px;"><span style="display:inline-block;transform:scaleX(0.9);transform-origin:right">68.01</span></div>
<div class="t" style="top:390px;height:17px;line-height:17px;font-size:14px;color:#000;right:421px;"><span style="display:inline-block;transform:scaleX(0.9);transform-origin:right">81.90</span></div>
<div class="t" style="top:390px;height:17px;line-height:17px;font-size:14px;color:#000;right:363px;"><span style="display:inline-block;transform:scaleX(0.9);transform-origin:right">83.19</span></div>
<div class="t" style="top:390px;height:17px;line-height:17px;font-size:14px;color:#c0c0c0;right:299px;"><span style="display:inline-block;transform:scaleX(0.9);transform-origin:right">91.92</span></div>
<div class="t" style="top:390px;height:17px;line-height:17px;font-size:14px;color:#c0c0c0;right:242px;"><span style="display:inline-block;transform:scaleX(0.9);transform-origin:right">103.66</span></div>
<div class="t" style="top:390px;height:17px;line-height:17px;font-size:14px;color:#000;right:178px;"><span style="display:inline-block;transform:scaleX(0.9);transform-origin:right">77.22</span></div>
<div class="t" style="top:390px;height:17px;line-height:17px;font-size:14px;color:#000;right:83px;"><span style="display:inline-block;transform:scaleX(0.9);transform-origin:right">2,086,434.79</span></div>
<div class="t" style="top:390px;height:17px;line-height:17px;font-size:14px;color:#000;right:12px;"><span style="display:inline-block;transform:scaleX(0.9);transform-origin:right">75.72</span></div>
<div class="t" style="top:407px;height:17px;line-height:17px;font-size:14px;color:#000;right:1057px;"><span style="display:inline-block;transform:scaleX(0.895);transform-origin:right">Jul-02</span></div>
<div class="t" style="top:407px;height:17px;line-height:17px;font-size:14px;color:#000;right:993px;"><span style="display:inline-block;transform:scaleX(0.9);transform-origin:right">45,574</span></div>
<div class="t" style="top:407px;height:17px;line-height:17px;font-size:14px;color:#000;right:929px;"><span style="display:inline-block;transform:scaleX(0.9);transform-origin:right">15,066</span></div>
<div class="t" style="top:407px;height:17px;line-height:17px;font-size:14px;color:#d4262c;right:865px;"><span style="display:inline-block;transform:scaleX(0.9);transform-origin:right">30,508</span></div>
<div class="t" style="top:407px;height:17px;line-height:17px;font-size:14px;color:#000;right:815px;"><span style="display:inline-block;transform:scaleX(0.9);transform-origin:right">9,152</span></div>
<div class="t" style="top:407px;height:17px;line-height:17px;font-size:14px;color:#000;right:770px;"><span style="display:inline-block;transform:scaleX(0.9);transform-origin:right">9,152</span></div>
<div class="t" style="top:407px;height:17px;line-height:17px;font-size:14px;color:#000;right:725px;"><span style="display:inline-block;transform:scaleX(0.9);transform-origin:right">0</span></div>
<div class="t" style="top:407px;height:17px;line-height:17px;font-size:14px;color:#000;right:666px;"><span style="display:inline-block;transform:scaleX(0.9);transform-origin:right">0</span></div>
<div class="t" style="top:407px;height:17px;line-height:17px;font-size:14px;color:#000;right:626px;"><span style="display:inline-block;transform:scaleX(0.9);transform-origin:right">0</span></div>
<div class="t" style="top:407px;height:17px;line-height:17px;font-size:14px;color:#000;right:562px;"><span style="display:inline-block;transform:scaleX(0.9);transform-origin:right">12,203</span></div>
<div class="t" style="top:407px;height:17px;line-height:17px;font-size:14px;color:#000;right:480px;"><span style="display:inline-block;transform:scaleX(0.9);transform-origin:right">68.01</span></div>
<div class="t" style="top:407px;height:17px;line-height:17px;font-size:14px;color:#000;right:421px;"><span style="display:inline-block;transform:scaleX(0.9);transform-origin:right">81.90</span></div>
<div class="t" style="top:407px;height:17px;line-height:17px;font-size:14px;color:#000;right:363px;"><span style="display:inline-block;transform:scaleX(0.9);transform-origin:right">83.19</span></div>
<div class="t" style="top:407px;height:17px;line-height:17px;font-size:14px;color:#c0c0c0;right:299px;"><span style="display:inline-block;transform:scaleX(0.9);transform-origin:right">91.92</span></div>
<div class="t" style="top:407px;height:17px;line-height:17px;font-size:14px;color:#c0c0c0;right:242px;"><span style="display:inline-block;transform:scaleX(0.9);transform-origin:right">103.66</span></div>
<div class="t" style="top:407px;height:17px;line-height:17px;font-size:14px;color:#000;right:178px;"><span style="display:inline-block;transform:scaleX(0.9);transform-origin:right">107.95</span></div>
<div class="t" style="top:407px;height:17px;line-height:17px;font-size:14px;color:#000;right:83px;"><span style="display:inline-block;transform:scaleX(0.9);transform-origin:right">2,689,311.38</span></div>
<div class="t" style="top:407px;height:17px;line-height:17px;font-size:14px;color:#000;right:12px;"><span style="display:inline-block;transform:scaleX(0.9);transform-origin:right">88.15</span></div>
<div class="t" style="top:424px;height:17px;line-height:17px;font-size:14px;color:#000;right:1057px;"><span style="display:inline-block;transform:scaleX(0.895);transform-origin:right">Aug-02</span></div>
<div class="t" style="top:424px;height:17px;line-height:17px;font-size:14px;color:#000;right:993px;"><span style="display:inline-block;transform:scaleX(0.9);transform-origin:right">44,661</span></div>
<div class="t" style="top:424px;height:17px;line-height:17px;font-size:14px;color:#000;right:929px;"><span style="display:inline-block;transform:scaleX(0.9);transform-origin:right">14,571</span></div>
<div class="t" style="top:424px;height:17px;line-height:17px;font-size:14px;color:#d4262c;right:865px;"><span style="display:inline-block;transform:scaleX(0.9);transform-origin:right">30,090</span></div>
<div class="t" style="top:424px;height:17px;line-height:17px;font-size:14px;color:#000;right:815px;"><span style="display:inline-block;transform:scaleX(0.9);transform-origin:right">9,152</span></div>
<div class="t" style="top:424px;height:17px;line-height:17px;font-size:14px;color:#000;right:770px;"><span style="display:inline-block;transform:scaleX(0.9);transform-origin:right">9,152</span></div>
<div class="t" style="top:424px;height:17px;line-height:17px;font-size:14px;color:#000;right:725px;"><span style="display:inline-block;transform:scaleX(0.9);transform-origin:right">0</span></div>
<div class="t" style="top:424px;height:17px;line-height:17px;font-size:14px;color:#000;right:666px;"><span style="display:inline-block;transform:scaleX(0.9);transform-origin:right">0</span></div>
<div class="t" style="top:424px;height:17px;line-height:17px;font-size:14px;color:#000;right:626px;"><span style="display:inline-block;transform:scaleX(0.9);transform-origin:right">0</span></div>
<div class="t" style="top:424px;height:17px;line-height:17px;font-size:14px;color:#000;right:562px;"><span style="display:inline-block;transform:scaleX(0.9);transform-origin:right">11,785</span></div>
<div class="t" style="top:424px;height:17px;line-height:17px;font-size:14px;color:#000;right:480px;"><span style="display:inline-block;transform:scaleX(0.9);transform-origin:right">68.01</span></div>
<div class="t" style="top:424px;height:17px;line-height:17px;font-size:14px;color:#000;right:421px;"><span style="display:inline-block;transform:scaleX(0.9);transform-origin:right">81.90</span></div>
<div class="t" style="top:424px;height:17px;line-height:17px;font-size:14px;color:#000;right:363px;"><span style="display:inline-block;transform:scaleX(0.9);transform-origin:right">83.19</span></div>
<div class="t" style="top:424px;height:17px;line-height:17px;font-size:14px;color:#c0c0c0;right:299px;"><span style="display:inline-block;transform:scaleX(0.9);transform-origin:right">91.92</span></div>
<div class="t" style="top:424px;height:17px;line-height:17px;font-size:14px;color:#c0c0c0;right:242px;"><span style="display:inline-block;transform:scaleX(0.9);transform-origin:right">103.66</span></div>
<div class="t" style="top:424px;height:17px;line-height:17px;font-size:14px;color:#000;right:178px;"><span style="display:inline-block;transform:scaleX(0.9);transform-origin:right">116.52</span></div>
<div class="t" style="top:424px;height:17px;line-height:17px;font-size:14px;color:#000;right:83px;"><span style="display:inline-block;transform:scaleX(0.9);transform-origin:right">2,745,202.33</span></div>
<div class="t" style="top:424px;height:17px;line-height:17px;font-size:14px;color:#000;right:12px;"><span style="display:inline-block;transform:scaleX(0.9);transform-origin:right">91.23</span></div>
<div class="t" style="top:441px;height:17px;line-height:17px;font-size:14px;color:#000;right:1057px;"><span style="display:inline-block;transform:scaleX(0.895);transform-origin:right">Sep-02</span></div>
<div class="t" style="top:441px;height:17px;line-height:17px;font-size:14px;color:#000;right:993px;"><span style="display:inline-block;transform:scaleX(0.9);transform-origin:right">44,243</span></div>
<div class="t" style="top:441px;height:17px;line-height:17px;font-size:14px;color:#000;right:929px;"><span style="display:inline-block;transform:scaleX(0.9);transform-origin:right">14,752</span></div>
<div class="t" style="top:441px;height:17px;line-height:17px;font-size:14px;color:#d4262c;right:865px;"><span style="display:inline-block;transform:scaleX(0.9);transform-origin:right">29,491</span></div>
<div class="t" style="top:441px;height:17px;line-height:17px;font-size:14px;color:#000;right:815px;"><span style="display:inline-block;transform:scaleX(0.9);transform-origin:right">9,152</span></div>
<div class="t" style="top:441px;height:17px;line-height:17px;font-size:14px;color:#000;right:770px;"><span style="display:inline-block;transform:scaleX(0.9);transform-origin:right">9,152</span></div>
<div class="t" style="top:441px;height:17px;line-height:17px;font-size:14px;color:#000;right:725px;"><span style="display:inline-block;transform:scaleX(0.9);transform-origin:right">0</span></div>
<div class="t" style="top:441px;height:17px;line-height:17px;font-size:14px;color:#000;right:666px;"><span style="display:inline-block;transform:scaleX(0.9);transform-origin:right">0</span></div>
<div class="t" style="top:441px;height:17px;line-height:17px;font-size:14px;color:#000;right:626px;"><span style="display:inline-block;transform:scaleX(0.9);transform-origin:right">0</span></div>
<div class="t" style="top:441px;height:17px;line-height:17px;font-size:14px;color:#000;right:562px;"><span style="display:inline-block;transform:scaleX(0.9);transform-origin:right">11,186</span></div>
<div class="t" style="top:441px;height:17px;line-height:17px;font-size:14px;color:#000;right:480px;"><span style="display:inline-block;transform:scaleX(0.9);transform-origin:right">68.01</span></div>
<div class="t" style="top:441px;height:17px;line-height:17px;font-size:14px;color:#000;right:421px;"><span style="display:inline-block;transform:scaleX(0.9);transform-origin:right">81.90</span></div>
<div class="t" style="top:441px;height:17px;line-height:17px;font-size:14px;color:#000;right:363px;"><span style="display:inline-block;transform:scaleX(0.9);transform-origin:right">83.19</span></div>
<div class="t" style="top:441px;height:17px;line-height:17px;font-size:14px;color:#c0c0c0;right:299px;"><span style="display:inline-block;transform:scaleX(0.9);transform-origin:right">91.92</span></div>
<div class="t" style="top:441px;height:17px;line-height:17px;font-size:14px;color:#c0c0c0;right:242px;"><span style="display:inline-block;transform:scaleX(0.9);transform-origin:right">103.66</span></div>
<div class="t" style="top:441px;height:17px;line-height:17px;font-size:14px;color:#000;right:178px;"><span style="display:inline-block;transform:scaleX(0.9);transform-origin:right">107.53</span></div>
<div class="t" style="top:441px;height:17px;line-height:17px;font-size:14px;color:#000;right:83px;"><span style="display:inline-block;transform:scaleX(0.9);transform-origin:right">2,574,859.96</span></div>
<div class="t" style="top:441px;height:17px;line-height:17px;font-size:14px;color:#000;right:12px;"><span style="display:inline-block;transform:scaleX(0.9);transform-origin:right">87.31</span></div>
<div class="t" style="top:458px;height:17px;line-height:17px;font-size:14px;color:#000;right:1057px;"><span style="display:inline-block;transform:scaleX(0.895);transform-origin:right">Oct-02</span></div>
<div class="t" style="top:458px;height:17px;line-height:17px;font-size:14px;color:#000;right:993px;"><span style="display:inline-block;transform:scaleX(0.9);transform-origin:right">36,692</span></div>
<div class="t" style="top:458px;height:17px;line-height:17px;font-size:14px;color:#000;right:929px;"><span style="display:inline-block;transform:scaleX(0.9);transform-origin:right">12,802</span></div>
<div class="t" style="top:458px;height:17px;line-height:17px;font-size:14px;color:#d4262c;right:865px;"><span style="display:inline-block;transform:scaleX(0.9);transform-origin:right">23,890</span></div>
<div class="t" style="top:458px;height:17px;line-height:17px;font-size:14px;color:#000;right:815px;"><span style="display:inline-block;transform:scaleX(0.9);transform-origin:right">9,152</span></div>
<div class="t" style="top:458px;height:17px;line-height:17px;font-size:14px;color:#000;right:770px;"><span style="display:inline-block;transform:scaleX(0.9);transform-origin:right">9,152</span></div>
<div class="t" style="top:458px;height:17px;line-height:17px;font-size:14px;color:#000;right:725px;"><span style="display:inline-block;transform:scaleX(0.9);transform-origin:right">0</span></div>
<div class="t" style="top:458px;height:17px;line-height:17px;font-size:14px;color:#000;right:666px;"><span style="display:inline-block;transform:scaleX(0.9);transform-origin:right">0</span></div>
<div class="t" style="top:458px;height:17px;line-height:17px;font-size:14px;color:#000;right:626px;"><span style="display:inline-block;transform:scaleX(0.9);transform-origin:right">0</span></div>
<div class="t" style="top:458px;height:17px;line-height:17px;font-size:14px;color:#000;right:562px;"><span style="display:inline-block;transform:scaleX(0.9);transform-origin:right">5,585</span></div>
<div class="t" style="top:458px;height:17px;line-height:17px;font-size:14px;color:#000;right:480px;"><span style="display:inline-block;transform:scaleX(0.9);transform-origin:right">68.01</span></div>
<div class="t" style="top:458px;height:17px;line-height:17px;font-size:14px;color:#000;right:421px;"><span style="display:inline-block;transform:scaleX(0.9);transform-origin:right">81.90</span></div>
<div class="t" style="top:458px;height:17px;line-height:17px;font-size:14px;color:#000;right:363px;"><span style="display:inline-block;transform:scaleX(0.9);transform-origin:right">83.19</span></div>
<div class="t" style="top:458px;height:17px;line-height:17px;font-size:14px;color:#c0c0c0;right:299px;"><span style="display:inline-block;transform:scaleX(0.9);transform-origin:right">91.92</span></div>
<div class="t" style="top:458px;height:17px;line-height:17px;font-size:14px;color:#c0c0c0;right:242px;"><span style="display:inline-block;transform:scaleX(0.9);transform-origin:right">103.66</span></div>
<div class="t" style="top:458px;height:17px;line-height:17px;font-size:14px;color:#000;right:178px;"><span style="display:inline-block;transform:scaleX(0.9);transform-origin:right">80.47</span></div>
<div class="t" style="top:458px;height:17px;line-height:17px;font-size:14px;color:#000;right:83px;"><span style="display:inline-block;transform:scaleX(0.9);transform-origin:right">1,821,409.48</span></div>
<div class="t" style="top:458px;height:17px;line-height:17px;font-size:14px;color:#000;right:12px;"><span style="display:inline-block;transform:scaleX(0.9);transform-origin:right">76.24</span></div>
<div class="t" style="top:475px;height:17px;line-height:17px;font-size:14px;color:#000;right:1057px;"><span style="display:inline-block;transform:scaleX(0.895);transform-origin:right">Nov-02</span></div>
<div class="t" style="top:475px;height:17px;line-height:17px;font-size:14px;color:#000;right:993px;"><span style="display:inline-block;transform:scaleX(0.9);transform-origin:right">33,180</span></div>
<div class="t" style="top:475px;height:17px;line-height:17px;font-size:14px;color:#000;right:929px;"><span style="display:inline-block;transform:scaleX(0.9);transform-origin:right">13,373</span></div>
<div class="t" style="top:475px;height:17px;line-height:17px;font-size:14px;color:#d4262c;right:865px;"><span style="display:inline-block;transform:scaleX(0.9);transform-origin:right">19,807</span></div>
<div class="t" style="top:475px;height:17px;line-height:17px;font-size:14px;color:#000;right:815px;"><span style="display:inline-block;transform:scaleX(0.9);transform-origin:right">9,152</span></div>
<div class="t" style="top:475px;height:17px;line-height:17px;font-size:14px;color:#000;right:770px;"><span style="display:inline-block;transform:scaleX(0.9);transform-origin:right">9,152</span></div>
<div class="t" style="top:475px;height:17px;line-height:17px;font-size:14px;color:#000;right:725px;"><span style="display:inline-block;transform:scaleX(0.9);transform-origin:right">0</span></div>
<div class="t" style="top:475px;height:17px;line-height:17px;font-size:14px;color:#000;right:666px;"><span style="display:inline-block;transform:scaleX(0.9);transform-origin:right">0</span></div>
<div class="t" style="top:475px;height:17px;line-height:17px;font-size:14px;color:#000;right:626px;"><span style="display:inline-block;transform:scaleX(0.9);transform-origin:right">0</span></div>
<div class="t" style="top:475px;height:17px;line-height:17px;font-size:14px;color:#000;right:562px;"><span style="display:inline-block;transform:scaleX(0.9);transform-origin:right">1,502</span></div>
<div class="t" style="top:475px;height:17px;line-height:17px;font-size:14px;color:#000;right:480px;"><span style="display:inline-block;transform:scaleX(0.9);transform-origin:right">68.01</span></div>
<div class="t" style="top:475px;height:17px;line-height:17px;font-size:14px;color:#000;right:421px;"><span style="display:inline-block;transform:scaleX(0.9);transform-origin:right">81.90</span></div>
<div class="t" style="top:475px;height:17px;line-height:17px;font-size:14px;color:#000;right:363px;"><span style="display:inline-block;transform:scaleX(0.9);transform-origin:right">83.19</span></div>
<div class="t" style="top:475px;height:17px;line-height:17px;font-size:14px;color:#c0c0c0;right:299px;"><span style="display:inline-block;transform:scaleX(0.9);transform-origin:right">91.92</span></div>
<div class="t" style="top:475px;height:17px;line-height:17px;font-size:14px;color:#c0c0c0;right:242px;"><span style="display:inline-block;transform:scaleX(0.9);transform-origin:right">103.66</span></div>
<div class="t" style="top:475px;height:17px;line-height:17px;font-size:14px;color:#000;right:178px;"><span style="display:inline-block;transform:scaleX(0.9);transform-origin:right">70.50</span></div>
<div class="t" style="top:475px;height:17px;line-height:17px;font-size:14px;color:#000;right:83px;"><span style="display:inline-block;transform:scaleX(0.9);transform-origin:right">1,477,935.37</span></div>
<div class="t" style="top:475px;height:17px;line-height:17px;font-size:14px;color:#000;right:12px;"><span style="display:inline-block;transform:scaleX(0.9);transform-origin:right">74.62</span></div>
<div class="t" style="top:492px;height:17px;line-height:17px;font-size:14px;color:#000;right:1057px;"><span style="display:inline-block;transform:scaleX(0.895);transform-origin:right">Dec-02</span></div>
<div class="t" style="top:492px;height:17px;line-height:17px;font-size:14px;color:#000;right:993px;"><span style="display:inline-block;transform:scaleX(0.9);transform-origin:right">34,319</span></div>
<div class="t" style="top:492px;height:17px;line-height:17px;font-size:14px;color:#000;right:929px;"><span style="display:inline-block;transform:scaleX(0.9);transform-origin:right">13,178</span></div>
<div class="t" style="top:492px;height:17px;line-height:17px;font-size:14px;color:#d4262c;right:865px;"><span style="display:inline-block;transform:scaleX(0.9);transform-origin:right">21,141</span></div>
<div class="t" style="top:492px;height:17px;line-height:17px;font-size:14px;color:#000;right:815px;"><span style="display:inline-block;transform:scaleX(0.9);transform-origin:right">9,152</span></div>
<div class="t" style="top:492px;height:17px;line-height:17px;font-size:14px;color:#000;right:770px;"><span style="display:inline-block;transform:scaleX(0.9);transform-origin:right">9,152</span></div>
<div class="t" style="top:492px;height:17px;line-height:17px;font-size:14px;color:#000;right:725px;"><span style="display:inline-block;transform:scaleX(0.9);transform-origin:right">0</span></div>
<div class="t" style="top:492px;height:17px;line-height:17px;font-size:14px;color:#000;right:666px;"><span style="display:inline-block;transform:scaleX(0.9);transform-origin:right">0</span></div>
<div class="t" style="top:492px;height:17px;line-height:17px;font-size:14px;color:#000;right:626px;"><span style="display:inline-block;transform:scaleX(0.9);transform-origin:right">0</span></div>
<div class="t" style="top:492px;height:17px;line-height:17px;font-size:14px;color:#000;right:562px;"><span style="display:inline-block;transform:scaleX(0.9);transform-origin:right">2,836</span></div>
<div class="t" style="top:492px;height:17px;line-height:17px;font-size:14px;color:#000;right:480px;"><span style="display:inline-block;transform:scaleX(0.9);transform-origin:right">68.01</span></div>
<div class="t" style="top:492px;height:17px;line-height:17px;font-size:14px;color:#000;right:421px;"><span style="display:inline-block;transform:scaleX(0.9);transform-origin:right">81.90</span></div>
<div class="t" style="top:492px;height:17px;line-height:17px;font-size:14px;color:#000;right:363px;"><span style="display:inline-block;transform:scaleX(0.9);transform-origin:right">83.19</span></div>
<div class="t" style="top:492px;height:17px;line-height:17px;font-size:14px;color:#c0c0c0;right:299px;"><span style="display:inline-block;transform:scaleX(0.9);transform-origin:right">91.92</span></div>
<div class="t" style="top:492px;height:17px;line-height:17px;font-size:14px;color:#c0c0c0;right:242px;"><span style="display:inline-block;transform:scaleX(0.9);transform-origin:right">103.66</span></div>
<div class="t" style="top:492px;height:17px;line-height:17px;font-size:14px;color:#000;right:178px;"><span style="display:inline-block;transform:scaleX(0.9);transform-origin:right">69.75</span></div>
<div class="t" style="top:492px;height:17px;line-height:17px;font-size:14px;color:#000;right:83px;"><span style="display:inline-block;transform:scaleX(0.9);transform-origin:right">1,569,836.32</span></div>
<div class="t" style="top:492px;height:17px;line-height:17px;font-size:14px;color:#000;right:12px;"><span style="display:inline-block;transform:scaleX(0.9);transform-origin:right">74.25</span></div>
<div class="t" style="top:509px;height:17px;line-height:17px;font-size:14px;color:#000;right:1057px;"><span style="display:inline-block;transform:scaleX(0.895);transform-origin:right">Jan-03</span></div>
<div class="t" style="top:509px;height:17px;line-height:17px;font-size:14px;color:#000;right:993px;"><span style="display:inline-block;transform:scaleX(0.9);transform-origin:right">32,675</span></div>
<div class="t" style="top:509px;height:17px;line-height:17px;font-size:14px;color:#000;right:929px;"><span style="display:inline-block;transform:scaleX(0.9);transform-origin:right">12,833</span></div>
<div class="t" style="top:509px;height:17px;line-height:17px;font-size:14px;color:#d4262c;right:865px;"><span style="display:inline-block;transform:scaleX(0.9);transform-origin:right">19,842</span></div>
<div class="t" style="top:509px;height:17px;line-height:17px;font-size:14px;color:#000;right:815px;"><span style="display:inline-block;transform:scaleX(0.9);transform-origin:right">9,152</span></div>
<div class="t" style="top:509px;height:17px;line-height:17px;font-size:14px;color:#000;right:770px;"><span style="display:inline-block;transform:scaleX(0.9);transform-origin:right">9,152</span></div>
<div class="t" style="top:509px;height:17px;line-height:17px;font-size:14px;color:#000;right:725px;"><span style="display:inline-block;transform:scaleX(0.9);transform-origin:right">0</span></div>
<div class="t" style="top:509px;height:17px;line-height:17px;font-size:14px;color:#000;right:666px;"><span style="display:inline-block;transform:scaleX(0.9);transform-origin:right">0</span></div>
<div class="t" style="top:509px;height:17px;line-height:17px;font-size:14px;color:#000;right:626px;"><span style="display:inline-block;transform:scaleX(0.9);transform-origin:right">0</span></div>
<div class="t" style="top:509px;height:17px;line-height:17px;font-size:14px;color:#000;right:562px;"><span style="display:inline-block;transform:scaleX(0.9);transform-origin:right">1,537</span></div>
<div class="t" style="top:509px;height:17px;line-height:17px;font-size:14px;color:#000;right:480px;"><span style="display:inline-block;transform:scaleX(0.9);transform-origin:right">68.01</span></div>
<div class="t" style="top:509px;height:17px;line-height:17px;font-size:14px;color:#000;right:421px;"><span style="display:inline-block;transform:scaleX(0.9);transform-origin:right">81.90</span></div>
<div class="t" style="top:509px;height:17px;line-height:17px;font-size:14px;color:#000;right:363px;"><span style="display:inline-block;transform:scaleX(0.9);transform-origin:right">63.99</span></div>
<div class="t" style="top:509px;height:17px;line-height:17px;font-size:14px;color:#c0c0c0;right:299px;"><span style="display:inline-block;transform:scaleX(0.9);transform-origin:right">91.92</span></div>
<div class="t" style="top:509px;height:17px;line-height:17px;font-size:14px;color:#c0c0c0;right:242px;"><span style="display:inline-block;transform:scaleX(0.9);transform-origin:right">103.66</span></div>
<div class="t" style="top:509px;height:17px;line-height:17px;font-size:14px;color:#000;right:178px;"><span style="display:inline-block;transform:scaleX(0.9);transform-origin:right">56.87</span></div>
<div class="t" style="top:509px;height:17px;line-height:17px;font-size:14px;color:#000;right:83px;"><span style="display:inline-block;transform:scaleX(0.9);transform-origin:right">1,459,437.81</span></div>
<div class="t" style="top:509px;height:17px;line-height:17px;font-size:14px;color:#000;right:12px;"><span style="display:inline-block;transform:scaleX(0.9);transform-origin:right">73.55</span></div>
<div class="t" style="top:526px;height:17px;line-height:17px;font-size:14px;color:#000;right:1057px;"><span style="display:inline-block;transform:scaleX(0.895);transform-origin:right">Feb-03</span></div>
<div class="t" style="top:526px;height:17px;line-height:17px;font-size:14px;color:#000;right:993px;"><span style="display:inline-block;transform:scaleX(0.9);transform-origin:right">32,071</span></div>
<div class="t" style="top:526px;height:17px;line-height:17px;font-size:14px;color:#000;right:929px;"><span style="display:inline-block;transform:scaleX(0.9);transform-origin:right">13,417</span></div>
<div class="t" style="top:526px;height:17px;line-height:17px;font-size:14px;color:#d4262c;right:865px;"><span style="display:inline-block;transform:scaleX(0.9);transform-origin:right">18,654</span></div>
<div class="t" style="top:526px;height:17px;line-height:17px;font-size:14px;color:#000;right:815px;"><span style="display:inline-block;transform:scaleX(0.9);transform-origin:right">9,152</span></div>
<div class="t" style="top:526px;height:17px;line-height:17px;font-size:14px;color:#000;right:770px;"><span style="display:inline-block;transform:scaleX(0.9);transform-origin:right">9,152</span></div>
<div class="t" style="top:526px;height:17px;line-height:17px;font-size:14px;color:#000;right:725px;"><span style="display:inline-block;transform:scaleX(0.9);transform-origin:right">0</span></div>
<div class="t" style="top:526px;height:17px;line-height:17px;font-size:14px;color:#000;right:666px;"><span style="display:inline-block;transform:scaleX(0.9);transform-origin:right">0</span></div>
<div class="t" style="top:526px;height:17px;line-height:17px;font-size:14px;color:#000;right:626px;"><span style="display:inline-block;transform:scaleX(0.9);transform-origin:right">0</span></div>
<div class="t" style="top:526px;height:17px;line-height:17px;font-size:14px;color:#000;right:562px;"><span style="display:inline-block;transform:scaleX(0.9);transform-origin:right">349</span></div>
<div class="t" style="top:526px;height:17px;line-height:17px;font-size:14px;color:#000;right:480px;"><span style="display:inline-block;transform:scaleX(0.9);transform-origin:right">68.01</span></div>
<div class="t" style="top:526px;height:17px;line-height:17px;font-size:14px;color:#000;right:421px;"><span style="display:inline-block;transform:scaleX(0.9);transform-origin:right">81.90</span></div>
<div class="t" style="top:526px;height:17px;line-height:17px;font-size:14px;color:#000;right:363px;"><span style="display:inline-block;transform:scaleX(0.9);transform-origin:right">63.99</span></div>
<div class="t" style="top:526px;height:17px;line-height:17px;font-size:14px;color:#c0c0c0;right:299px;"><span style="display:inline-block;transform:scaleX(0.9);transform-origin:right">91.92</span></div>
<div class="t" style="top:526px;height:17px;line-height:17px;font-size:14px;color:#c0c0c0;right:242px;"><span style="display:inline-block;transform:scaleX(0.9);transform-origin:right">103.66</span></div>
<div class="t" style="top:526px;height:17px;line-height:17px;font-size:14px;color:#000;right:178px;"><span style="display:inline-block;transform:scaleX(0.9);transform-origin:right">55.01</span></div>
<div class="t" style="top:526px;height:17px;line-height:17px;font-size:14px;color:#000;right:83px;"><span style="display:inline-block;transform:scaleX(0.9);transform-origin:right">1,391,198.41</span></div>
<div class="t" style="top:526px;height:17px;line-height:17px;font-size:14px;color:#000;right:12px;"><span style="display:inline-block;transform:scaleX(0.9);transform-origin:right">74.58</span></div>
<div class="t" style="top:543px;height:17px;line-height:17px;font-size:14px;color:#000;right:1057px;"><span style="display:inline-block;transform:scaleX(0.895);transform-origin:right">Mar-03</span></div>
<div class="t" style="top:543px;height:17px;line-height:17px;font-size:14px;color:#000;right:993px;"><span style="display:inline-block;transform:scaleX(0.9);transform-origin:right">32,340</span></div>
<div class="t" style="top:543px;height:17px;line-height:17px;font-size:14px;color:#000;right:929px;"><span style="display:inline-block;transform:scaleX(0.9);transform-origin:right">13,638</span></div>
<div class="t" style="top:543px;height:17px;line-height:17px;font-size:14px;color:#d4262c;right:865px;"><span style="display:inline-block;transform:scaleX(0.9);transform-origin:right">18,702</span></div>
<div class="t" style="top:543px;height:17px;line-height:17px;font-size:14px;color:#000;right:815px;"><span style="display:inline-block;transform:scaleX(0.9);transform-origin:right">9,152</span></div>
<div class="t" style="top:543px;height:17px;line-height:17px;font-size:14px;color:#000;right:770px;"><span style="display:inline-block;transform:scaleX(0.9);transform-origin:right">9,152</span></div>
<div class="t" style="top:543px;height:17px;line-height:17px;font-size:14px;color:#000;right:725px;"><span style="display:inline-block;transform:scaleX(0.9);transform-origin:right">0</span></div>
<div class="t" style="top:543px;height:17px;line-height:17px;font-size:14px;color:#000;right:666px;"><span style="display:inline-block;transform:scaleX(0.9);transform-origin:right">0</span></div>
<div class="t" style="top:543px;height:17px;line-height:17px;font-size:14px;color:#000;right:626px;"><span style="display:inline-block;transform:scaleX(0.9);transform-origin:right">0</span></div>
<div class="t" style="top:543px;height:17px;line-height:17px;font-size:14px;color:#000;right:562px;"><span style="display:inline-block;transform:scaleX(0.9);transform-origin:right">397</span></div>
<div class="t" style="top:543px;height:17px;line-height:17px;font-size:14px;color:#000;right:480px;"><span style="display:inline-block;transform:scaleX(0.9);transform-origin:right">68.01</span></div>
<div class="t" style="top:543px;height:17px;line-height:17px;font-size:14px;color:#000;right:421px;"><span style="display:inline-block;transform:scaleX(0.9);transform-origin:right">81.90</span></div>
<div class="t" style="top:543px;height:17px;line-height:17px;font-size:14px;color:#000;right:363px;"><span style="display:inline-block;transform:scaleX(0.9);transform-origin:right">63.99</span></div>
<div class="t" style="top:543px;height:17px;line-height:17px;font-size:14px;color:#c0c0c0;right:299px;"><span style="display:inline-block;transform:scaleX(0.9);transform-origin:right">91.92</span></div>
<div class="t" style="top:543px;height:17px;line-height:17px;font-size:14px;color:#c0c0c0;right:242px;"><span style="display:inline-block;transform:scaleX(0.9);transform-origin:right">103.66</span></div>
<div class="t" style="top:543px;height:17px;line-height:17px;font-size:14px;color:#000;right:178px;"><span style="display:inline-block;transform:scaleX(0.9);transform-origin:right">53.84</span></div>
<div class="t" style="top:543px;height:17px;line-height:17px;font-size:14px;color:#000;right:83px;"><span style="display:inline-block;transform:scaleX(0.9);transform-origin:right">1,393,373.23</span></div>
<div class="t" style="top:543px;height:17px;line-height:17px;font-size:14px;color:#000;right:12px;"><span style="display:inline-block;transform:scaleX(0.9);transform-origin:right">74.51</span></div>
<div class="t" style="top:560px;height:17px;line-height:17px;font-size:14px;color:#000;right:1057px;"><span style="display:inline-block;transform:scaleX(0.895);transform-origin:right">Apr-03</span></div>
<div class="t" style="top:560px;height:17px;line-height:17px;font-size:14px;color:#000;right:993px;"><span style="display:inline-block;transform:scaleX(0.9);transform-origin:right">33,013</span></div>
<div class="t" style="top:560px;height:17px;line-height:17px;font-size:14px;color:#000;right:929px;"><span style="display:inline-block;transform:scaleX(0.9);transform-origin:right">13,854</span></div>
<div class="t" style="top:560px;height:17px;line-height:17px;font-size:14px;color:#d4262c;right:865px;"><span style="display:inline-block;transform:scaleX(0.9);transform-origin:right">19,159</span></div>
<div class="t" style="top:560px;height:17px;line-height:17px;font-size:14px;color:#000;right:815px;"><span style="display:inline-block;transform:scaleX(0.9);transform-origin:right">9,152</span></div>
<div class="t" style="top:560px;height:17px;line-height:17px;font-size:14px;color:#000;right:770px;"><span style="display:inline-block;transform:scaleX(0.9);transform-origin:right">9,152</span></div>
<div class="t" style="top:560px;height:17px;line-height:17px;font-size:14px;color:#000;right:725px;"><span style="display:inline-block;transform:scaleX(0.9);transform-origin:right">0</span></div>
<div class="t" style="top:560px;height:17px;line-height:17px;font-size:14px;color:#000;right:666px;"><span style="display:inline-block;transform:scaleX(0.9);transform-origin:right">0</span></div>
<div class="t" style="top:560px;height:17px;line-height:17px;font-size:14px;color:#000;right:626px;"><span style="display:inline-block;transform:scaleX(0.9);transform-origin:right">0</span></div>
<div class="t" style="top:560px;height:17px;line-height:17px;font-size:14px;color:#000;right:562px;"><span style="display:inline-block;transform:scaleX(0.9);transform-origin:right">854</span></div>
<div class="t" style="top:560px;height:17px;line-height:17px;font-size:14px;color:#000;right:480px;"><span style="display:inline-block;transform:scaleX(0.9);transform-origin:right">68.01</span></div>
<div class="t" style="top:560px;height:17px;line-height:17px;font-size:14px;color:#000;right:421px;"><span style="display:inline-block;transform:scaleX(0.9);transform-origin:right">81.90</span></div>
<div class="t" style="top:560px;height:17px;line-height:17px;font-size:14px;color:#000;right:363px;"><span style="display:inline-block;transform:scaleX(0.9);transform-origin:right">63.99</span></div>
<div class="t" style="top:560px;height:17px;line-height:17px;font-size:14px;color:#c0c0c0;right:299px;"><span style="display:inline-block;transform:scaleX(0.9);transform-origin:right">91.92</span></div>
<div class="t" style="top:560px;height:17px;line-height:17px;font-size:14px;color:#c0c0c0;right:242px;"><span style="display:inline-block;transform:scaleX(0.9);transform-origin:right">103.66</span></div>
<div class="t" style="top:560px;height:17px;line-height:17px;font-size:14px;color:#000;right:178px;"><span style="display:inline-block;transform:scaleX(0.9);transform-origin:right">53.12</span></div>
<div class="t" style="top:560px;height:17px;line-height:17px;font-size:14px;color:#000;right:83px;"><span style="display:inline-block;transform:scaleX(0.9);transform-origin:right">1,417,406.81</span></div>
<div class="t" style="top:560px;height:17px;line-height:17px;font-size:14px;color:#000;right:12px;"><span style="display:inline-block;transform:scaleX(0.9);transform-origin:right">73.98</span></div>
<div class="t" style="top:577px;height:17px;line-height:17px;font-size:14px;color:#000;right:1057px;"><span style="display:inline-block;transform:scaleX(0.895);transform-origin:right">May-03</span></div>
<div class="t" style="top:577px;height:17px;line-height:17px;font-size:14px;color:#000;right:993px;"><span style="display:inline-block;transform:scaleX(0.9);transform-origin:right">39,521</span></div>
<div class="t" style="top:577px;height:17px;line-height:17px;font-size:14px;color:#000;right:929px;"><span style="display:inline-block;transform:scaleX(0.9);transform-origin:right">13,764</span></div>
<div class="t" style="top:577px;height:17px;line-height:17px;font-size:14px;color:#d4262c;right:865px;"><span style="display:inline-block;transform:scaleX(0.9);transform-origin:right">25,757</span></div>
<div class="t" style="top:577px;height:17px;line-height:17px;font-size:14px;color:#000;right:815px;"><span style="display:inline-block;transform:scaleX(0.9);transform-origin:right">9,152</span></div>
<div class="t" style="top:577px;height:17px;line-height:17px;font-size:14px;color:#000;right:770px;"><span style="display:inline-block;transform:scaleX(0.9);transform-origin:right">9,152</span></div>
<div class="t" style="top:577px;height:17px;line-height:17px;font-size:14px;color:#000;right:725px;"><span style="display:inline-block;transform:scaleX(0.9);transform-origin:right">0</span></div>
<div class="t" style="top:577px;height:17px;line-height:17px;font-size:14px;color:#000;right:666px;"><span style="display:inline-block;transform:scaleX(0.9);transform-origin:right">0</span></div>
<div class="t" style="top:577px;height:17px;line-height:17px;font-size:14px;color:#000;right:626px;"><span style="display:inline-block;transform:scaleX(0.9);transform-origin:right">0</span></div>
<div class="t" style="top:577px;height:17px;line-height:17px;font-size:14px;color:#000;right:562px;"><span style="display:inline-block;transform:scaleX(0.9);transform-origin:right">7,453</span></div>
<div class="t" style="top:577px;height:17px;line-height:17px;font-size:14px;color:#000;right:480px;"><span style="display:inline-block;transform:scaleX(0.9);transform-origin:right">68.01</span></div>
<div class="t" style="top:577px;height:17px;line-height:17px;font-size:14px;color:#000;right:421px;"><span style="display:inline-block;transform:scaleX(0.9);transform-origin:right">81.90</span></div>
<div class="t" style="top:577px;height:17px;line-height:17px;font-size:14px;color:#000;right:363px;"><span style="display:inline-block;transform:scaleX(0.9);transform-origin:right">63.99</span></div>
<div class="t" style="top:577px;height:17px;line-height:17px;font-size:14px;color:#c0c0c0;right:299px;"><span style="display:inline-block;transform:scaleX(0.9);transform-origin:right">91.92</span></div>
<div class="t" style="top:577px;height:17px;line-height:17px;font-size:14px;color:#c0c0c0;right:242px;"><span style="display:inline-block;transform:scaleX(0.9);transform-origin:right">103.66</span></div>
<div class="t" style="top:577px;height:17px;line-height:17px;font-size:14px;color:#000;right:178px;"><span style="display:inline-block;transform:scaleX(0.9);transform-origin:right">53.65</span></div>
<div class="t" style="top:577px;height:17px;line-height:17px;font-size:14px;color:#000;right:83px;"><span style="display:inline-block;transform:scaleX(0.9);transform-origin:right">1,771,804.84</span></div>
<div class="t" style="top:577px;height:17px;line-height:17px;font-size:14px;color:#000;right:12px;"><span style="display:inline-block;transform:scaleX(0.9);transform-origin:right">68.79</span></div>
<div class="t" style="top:594px;height:17px;line-height:17px;font-size:14px;color:#000;right:1057px;"><span style="display:inline-block;transform:scaleX(0.895);transform-origin:right">Jun-03</span></div>
<div class="t" style="top:594px;height:17px;line-height:17px;font-size:14px;color:#000;right:993px;"><span style="display:inline-block;transform:scaleX(0.9);transform-origin:right">43,447</span></div>
<div class="t" style="top:594px;height:17px;line-height:17px;font-size:14px;color:#000;right:929px;"><span style="display:inline-block;transform:scaleX(0.9);transform-origin:right">15,891</span></div>
<div class="t" style="top:594px;height:17px;line-height:17px;font-size:14px;color:#d4262c;right:865px;"><span style="display:inline-block;transform:scaleX(0.9);transform-origin:right">27,556</span></div>
<div class="t" style="top:594px;height:17px;line-height:17px;font-size:14px;color:#000;right:815px;"><span style="display:inline-block;transform:scaleX(0.9);transform-origin:right">9,152</span></div>
<div class="t" style="top:594px;height:17px;line-height:17px;font-size:14px;color:#000;right:770px;"><span style="display:inline-block;transform:scaleX(0.9);transform-origin:right">9,152</span></div>
<div class="t" style="top:594px;height:17px;line-height:17px;font-size:14px;color:#000;right:725px;"><span style="display:inline-block;transform:scaleX(0.9);transform-origin:right">0</span></div>
<div class="t" style="top:594px;height:17px;line-height:17px;font-size:14px;color:#000;right:666px;"><span style="display:inline-block;transform:scaleX(0.9);transform-origin:right">0</span></div>
<div class="t" style="top:594px;height:17px;line-height:17px;font-size:14px;color:#000;right:626px;"><span style="display:inline-block;transform:scaleX(0.9);transform-origin:right">0</span></div>
<div class="t" style="top:594px;height:17px;line-height:17px;font-size:14px;color:#000;right:562px;"><span style="display:inline-block;transform:scaleX(0.9);transform-origin:right">9,251</span></div>
<div class="t" style="top:594px;height:17px;line-height:17px;font-size:14px;color:#000;right:480px;"><span style="display:inline-block;transform:scaleX(0.9);transform-origin:right">68.01</span></div>
<div class="t" style="top:594px;height:17px;line-height:17px;font-size:14px;color:#000;right:421px;"><span style="display:inline-block;transform:scaleX(0.9);transform-origin:right">81.90</span></div>
<div class="t" style="top:594px;height:17px;line-height:17px;font-size:14px;color:#000;right:363px;"><span style="display:inline-block;transform:scaleX(0.9);transform-origin:right">63.99</span></div>
<div class="t" style="top:594px;height:17px;line-height:17px;font-size:14px;color:#c0c0c0;right:299px;"><span style="display:inline-block;transform:scaleX(0.9);transform-origin:right">91.92</span></div>
<div class="t" style="top:594px;height:17px;line-height:17px;font-size:14px;color:#c0c0c0;right:242px;"><span style="display:inline-block;transform:scaleX(0.9);transform-origin:right">103.66</span></div>
<div class="t" style="top:594px;height:17px;line-height:17px;font-size:14px;color:#000;right:178px;"><span style="display:inline-block;transform:scaleX(0.9);transform-origin:right">61.36</span></div>
<div class="t" style="top:594px;height:17px;line-height:17px;font-size:14px;color:#000;right:83px;"><span style="display:inline-block;transform:scaleX(0.9);transform-origin:right">1,939,695.83</span></div>
<div class="t" style="top:594px;height:17px;line-height:17px;font-size:14px;color:#000;right:12px;"><span style="display:inline-block;transform:scaleX(0.9);transform-origin:right">70.39</span></div>
<div class="t" style="top:611px;height:17px;line-height:17px;font-size:14px;color:#000;right:1057px;"><span style="display:inline-block;transform:scaleX(0.895);transform-origin:right">Jul-03</span></div>
<div class="t" style="top:611px;height:17px;line-height:17px;font-size:14px;color:#000;right:993px;"><span style="display:inline-block;transform:scaleX(0.9);transform-origin:right">45,574</span></div>
<div class="t" style="top:611px;height:17px;line-height:17px;font-size:14px;color:#000;right:929px;"><span style="display:inline-block;transform:scaleX(0.9);transform-origin:right">15,066</span></div>
<div class="t" style="top:611px;height:17px;line-height:17px;font-size:14px;color:#d4262c;right:865px;"><span style="display:inline-block;transform:scaleX(0.9);transform-origin:right">30,508</span></div>
<div class="t" style="top:611px;height:17px;line-height:17px;font-size:14px;color:#000;right:815px;"><span style="display:inline-block;transform:scaleX(0.9);transform-origin:right">9,152</span></div>
<div class="t" style="top:611px;height:17px;line-height:17px;font-size:14px;color:#000;right:770px;"><span style="display:inline-block;transform:scaleX(0.9);transform-origin:right">9,152</span></div>
<div class="t" style="top:611px;height:17px;line-height:17px;font-size:14px;color:#000;right:725px;"><span style="display:inline-block;transform:scaleX(0.9);transform-origin:right">0</span></div>
<div class="t" style="top:611px;height:17px;line-height:17px;font-size:14px;color:#000;right:666px;"><span style="display:inline-block;transform:scaleX(0.9);transform-origin:right">0</span></div>
<div class="t" style="top:611px;height:17px;line-height:17px;font-size:14px;color:#000;right:626px;"><span style="display:inline-block;transform:scaleX(0.9);transform-origin:right">0</span></div>
<div class="t" style="top:611px;height:17px;line-height:17px;font-size:14px;color:#000;right:562px;"><span style="display:inline-block;transform:scaleX(0.9);transform-origin:right">12,203</span></div>
<div class="t" style="top:611px;height:17px;line-height:17px;font-size:14px;color:#000;right:480px;"><span style="display:inline-block;transform:scaleX(0.9);transform-origin:right">68.01</span></div>
<div class="t" style="top:611px;height:17px;line-height:17px;font-size:14px;color:#000;right:421px;"><span style="display:inline-block;transform:scaleX(0.9);transform-origin:right">81.90</span></div>
<div class="t" style="top:611px;height:17px;line-height:17px;font-size:14px;color:#000;right:363px;"><span style="display:inline-block;transform:scaleX(0.9);transform-origin:right">63.99</span></div>
<div class="t" style="top:611px;height:17px;line-height:17px;font-size:14px;color:#c0c0c0;right:299px;"><span style="display:inline-block;transform:scaleX(0.9);transform-origin:right">91.92</span></div>
<div class="t" style="top:611px;height:17px;line-height:17px;font-size:14px;color:#c0c0c0;right:242px;"><span style="display:inline-block;transform:scaleX(0.9);transform-origin:right">103.66</span></div>
<div class="t" style="top:611px;height:17px;line-height:17px;font-size:14px;color:#000;right:178px;"><span style="display:inline-block;transform:scaleX(0.9);transform-origin:right">85.97</span></div>
<div class="t" style="top:611px;height:17px;line-height:17px;font-size:14px;color:#000;right:83px;"><span style="display:inline-block;transform:scaleX(0.9);transform-origin:right">2,421,134.61</span></div>
<div class="t" style="top:611px;height:17px;line-height:17px;font-size:14px;color:#000;right:12px;"><span style="display:inline-block;transform:scaleX(0.9);transform-origin:right">79.36</span></div>
<div class="t" style="top:628px;height:17px;line-height:17px;font-size:14px;color:#000;right:1057px;"><span style="display:inline-block;transform:scaleX(0.895);transform-origin:right">Aug-03</span></div>
<div class="t" style="top:628px;height:17px;line-height:17px;font-size:14px;color:#000;right:993px;"><span style="display:inline-block;transform:scaleX(0.9);transform-origin:right">44,661</span></div>
<div class="t" style="top:628px;height:17px;line-height:17px;font-size:14px;color:#000;right:929px;"><span style="display:inline-block;transform:scaleX(0.9);transform-origin:right">14,571</span></div>
<div class="t" style="top:628px;height:17px;line-height:17px;font-size:14px;color:#d4262c;right:865px;"><span style="display:inline-block;transform:scaleX(0.9);transform-origin:right">30,090</span></div>
<div class="t" style="top:628px;height:17px;line-height:17px;font-size:14px;color:#000;right:815px;"><span style="display:inline-block;transform:scaleX(0.9);transform-origin:right">9,152</span></div>
<div class="t" style="top:628px;height:17px;line-height:17px;font-size:14px;color:#000;right:770px;"><span style="display:inline-block;transform:scaleX(0.9);transform-origin:right">9,152</span></div>
<div class="t" style="top:628px;height:17px;line-height:17px;font-size:14px;color:#000;right:725px;"><span style="display:inline-block;transform:scaleX(0.9);transform-origin:right">0</span></div>
<div class="t" style="top:628px;height:17px;line-height:17px;font-size:14px;color:#000;right:666px;"><span style="display:inline-block;transform:scaleX(0.9);transform-origin:right">0</span></div>
<div class="t" style="top:628px;height:17px;line-height:17px;font-size:14px;color:#000;right:626px;"><span style="display:inline-block;transform:scaleX(0.9);transform-origin:right">0</span></div>
<div class="t" style="top:628px;height:17px;line-height:17px;font-size:14px;color:#000;right:562px;"><span style="display:inline-block;transform:scaleX(0.9);transform-origin:right">11,785</span></div>
<div class="t" style="top:628px;height:17px;line-height:17px;font-size:14px;color:#000;right:480px;"><span style="display:inline-block;transform:scaleX(0.9);transform-origin:right">68.01</span></div>
<div class="t" style="top:628px;height:17px;line-height:17px;font-size:14px;color:#000;right:421px;"><span style="display:inline-block;transform:scaleX(0.9);transform-origin:right">81.90</span></div>
<div class="t" style="top:628px;height:17px;line-height:17px;font-size:14px;color:#000;right:363px;"><span style="display:inline-block;transform:scaleX(0.9);transform-origin:right">63.99</span></div>
<div class="t" style="top:628px;height:17px;line-height:17px;font-size:14px;color:#c0c0c0;right:299px;"><span style="display:inline-block;transform:scaleX(0.9);transform-origin:right">91.92</span></div>
<div class="t" style="top:628px;height:17px;line-height:17px;font-size:14px;color:#c0c0c0;right:242px;"><span style="display:inline-block;transform:scaleX(0.9);transform-origin:right">103.66</span></div>
<div class="t" style="top:628px;height:17px;line-height:17px;font-size:14px;color:#000;right:178px;"><span style="display:inline-block;transform:scaleX(0.9);transform-origin:right">93.73</span></div>
<div class="t" style="top:628px;height:17px;line-height:17px;font-size:14px;color:#000;right:83px;"><span style="display:inline-block;transform:scaleX(0.9);transform-origin:right">2,476,641.10</span></div>
<div class="t" style="top:628px;height:17px;line-height:17px;font-size:14px;color:#000;right:12px;"><span style="display:inline-block;transform:scaleX(0.9);transform-origin:right">82.31</span></div>
<div class="t" style="top:645px;height:17px;line-height:17px;font-size:14px;color:#000;right:1057px;"><span style="display:inline-block;transform:scaleX(0.895);transform-origin:right">Sep-03</span></div>
<div class="t" style="top:645px;height:17px;line-height:17px;font-size:14px;color:#000;right:993px;"><span style="display:inline-block;transform:scaleX(0.9);transform-origin:right">44,243</span></div>
<div class="t" style="top:645px;height:17px;line-height:17px;font-size:14px;color:#000;right:929px;"><span style="display:inline-block;transform:scaleX(0.9);transform-origin:right">14,752</span></div>
<div class="t" style="top:645px;height:17px;line-height:17px;font-size:14px;color:#d4262c;right:865px;"><span style="display:inline-block;transform:scaleX(0.9);transform-origin:right">29,491</span></div>
<div class="t" style="top:645px;height:17px;line-height:17px;font-size:14px;color:#000;right:815px;"><span style="display:inline-block;transform:scaleX(0.9);transform-origin:right">9,152</span></div>
<div class="t" style="top:645px;height:17px;line-height:17px;font-size:14px;color:#000;right:770px;"><span style="display:inline-block;transform:scaleX(0.9);transform-origin:right">9,152</span></div>
<div class="t" style="top:645px;height:17px;line-height:17px;font-size:14px;color:#000;right:725px;"><span style="display:inline-block;transform:scaleX(0.9);transform-origin:right">0</span></div>
<div class="t" style="top:645px;height:17px;line-height:17px;font-size:14px;color:#000;right:666px;"><span style="display:inline-block;transform:scaleX(0.9);transform-origin:right">0</span></div>
<div class="t" style="top:645px;height:17px;line-height:17px;font-size:14px;color:#000;right:626px;"><span style="display:inline-block;transform:scaleX(0.9);transform-origin:right">0</span></div>
<div class="t" style="top:645px;height:17px;line-height:17px;font-size:14px;color:#000;right:562px;"><span style="display:inline-block;transform:scaleX(0.9);transform-origin:right">11,186</span></div>
<div class="t" style="top:645px;height:17px;line-height:17px;font-size:14px;color:#000;right:480px;"><span style="display:inline-block;transform:scaleX(0.9);transform-origin:right">68.01</span></div>
<div class="t" style="top:645px;height:17px;line-height:17px;font-size:14px;color:#000;right:421px;"><span style="display:inline-block;transform:scaleX(0.9);transform-origin:right">81.90</span></div>
<div class="t" style="top:645px;height:17px;line-height:17px;font-size:14px;color:#000;right:363px;"><span style="display:inline-block;transform:scaleX(0.9);transform-origin:right">63.99</span></div>
<div class="t" style="top:645px;height:17px;line-height:17px;font-size:14px;color:#c0c0c0;right:299px;"><span style="display:inline-block;transform:scaleX(0.9);transform-origin:right">91.92</span></div>
<div class="t" style="top:645px;height:17px;line-height:17px;font-size:14px;color:#c0c0c0;right:242px;"><span style="display:inline-block;transform:scaleX(0.9);transform-origin:right">103.66</span></div>
<div class="t" style="top:645px;height:17px;line-height:17px;font-size:14px;color:#000;right:178px;"><span style="display:inline-block;transform:scaleX(0.9);transform-origin:right">86.44</span></div>
<div class="t" style="top:645px;height:17px;line-height:17px;font-size:14px;color:#000;right:83px;"><span style="display:inline-block;transform:scaleX(0.9);transform-origin:right">2,338,963.93</span></div>
<div class="t" style="top:645px;height:17px;line-height:17px;font-size:14px;color:#000;right:12px;"><span style="display:inline-block;transform:scaleX(0.9);transform-origin:right">79.31</span></div>
<div class="t" style="top:662px;height:17px;line-height:17px;font-size:14px;color:#000;right:1057px;"><span style="display:inline-block;transform:scaleX(0.895);transform-origin:right">Oct-03</span></div>
<div class="t" style="top:662px;height:17px;line-height:17px;font-size:14px;color:#000;right:993px;"><span style="display:inline-block;transform:scaleX(0.9);transform-origin:right">36,692</span></div>
<div class="t" style="top:662px;height:17px;line-height:17px;font-size:14px;color:#000;right:929px;"><span style="display:inline-block;transform:scaleX(0.9);transform-origin:right">12,802</span></div>
<div class="t" style="top:662px;height:17px;line-height:17px;font-size:14px;color:#d4262c;right:865px;"><span style="display:inline-block;transform:scaleX(0.9);transform-origin:right">23,890</span></div>
<div class="t" style="top:662px;height:17px;line-height:17px;font-size:14px;color:#000;right:815px;"><span style="display:inline-block;transform:scaleX(0.9);transform-origin:right">9,152</span></div>
<div class="t" style="top:662px;height:17px;line-height:17px;font-size:14px;color:#000;right:770px;"><span style="display:inline-block;transform:scaleX(0.9);transform-origin:right">9,152</span></div>
<div class="t" style="top:662px;height:17px;line-height:17px;font-size:14px;color:#000;right:725px;"><span style="display:inline-block;transform:scaleX(0.9);transform-origin:right">0</span></div>
<div class="t" style="top:662px;height:17px;line-height:17px;font-size:14px;color:#000;right:666px;"><span style="display:inline-block;transform:scaleX(0.9);transform-origin:right">0</span></div>
<div class="t" style="top:662px;height:17px;line-height:17px;font-size:14px;color:#000;right:626px;"><span style="display:inline-block;transform:scaleX(0.9);transform-origin:right">0</span></div>
<div class="t" style="top:662px;height:17px;line-height:17px;font-size:14px;color:#000;right:562px;"><span style="display:inline-block;transform:scaleX(0.9);transform-origin:right">5,585</span></div>
<div class="t" style="top:662px;height:17px;line-height:17px;font-size:14px;color:#000;right:480px;"><span style="display:inline-block;transform:scaleX(0.9);transform-origin:right">68.01</span></div>
<div class="t" style="top:662px;height:17px;line-height:17px;font-size:14px;color:#000;right:421px;"><span style="display:inline-block;transform:scaleX(0.9);transform-origin:right">81.90</span></div>
<div class="t" style="top:662px;height:17px;line-height:17px;font-size:14px;color:#000;right:363px;"><span style="display:inline-block;transform:scaleX(0.9);transform-origin:right">63.99</span></div>
<div class="t" style="top:662px;height:17px;line-height:17px;font-size:14px;color:#c0c0c0;right:299px;"><span style="display:inline-block;transform:scaleX(0.9);transform-origin:right">91.92</span></div>
<div class="t" style="top:662px;height:17px;line-height:17px;font-size:14px;color:#c0c0c0;right:242px;"><span style="display:inline-block;transform:scaleX(0.9);transform-origin:right">103.66</span></div>
<div class="t" style="top:662px;height:17px;line-height:17px;font-size:14px;color:#000;right:178px;"><span style="display:inline-block;transform:scaleX(0.9);transform-origin:right">60.01</span></div>
<div class="t" style="top:662px;height:17px;line-height:17px;font-size:14px;color:#000;right:83px;"><span style="display:inline-block;transform:scaleX(0.9);transform-origin:right">1,707,131.44</span></div>
<div class="t" style="top:662px;height:17px;line-height:17px;font-size:14px;color:#000;right:12px;"><span style="display:inline-block;transform:scaleX(0.9);transform-origin:right">71.46</span></div>
<div class="t" style="top:679px;height:17px;line-height:17px;font-size:14px;color:#000;right:1057px;"><span style="display:inline-block;transform:scaleX(0.895);transform-origin:right">Nov-03</span></div>
<div class="t" style="top:679px;height:17px;line-height:17px;font-size:14px;color:#000;right:993px;"><span style="display:inline-block;transform:scaleX(0.9);transform-origin:right">33,180</span></div>
<div class="t" style="top:679px;height:17px;line-height:17px;font-size:14px;color:#000;right:929px;"><span style="display:inline-block;transform:scaleX(0.9);transform-origin:right">13,373</span></div>
<div class="t" style="top:679px;height:17px;line-height:17px;font-size:14px;color:#d4262c;right:865px;"><span style="display:inline-block;transform:scaleX(0.9);transform-origin:right">19,807</span></div>
<div class="t" style="top:679px;height:17px;line-height:17px;font-size:14px;color:#000;right:815px;"><span style="display:inline-block;transform:scaleX(0.9);transform-origin:right">9,152</span></div>
<div class="t" style="top:679px;height:17px;line-height:17px;font-size:14px;color:#000;right:770px;"><span style="display:inline-block;transform:scaleX(0.9);transform-origin:right">9,152</span></div>
<div class="t" style="top:679px;height:17px;line-height:17px;font-size:14px;color:#000;right:725px;"><span style="display:inline-block;transform:scaleX(0.9);transform-origin:right">0</span></div>
<div class="t" style="top:679px;height:17px;line-height:17px;font-size:14px;color:#000;right:666px;"><span style="display:inline-block;transform:scaleX(0.9);transform-origin:right">0</span></div>
<div class="t" style="top:679px;height:17px;line-height:17px;font-size:14px;color:#000;right:626px;"><span style="display:inline-block;transform:scaleX(0.9);transform-origin:right">0</span></div>
<div class="t" style="top:679px;height:17px;line-height:17px;font-size:14px;color:#000;right:562px;"><span style="display:inline-block;transform:scaleX(0.9);transform-origin:right">1,502</span></div>
<div class="t" style="top:679px;height:17px;line-height:17px;font-size:14px;color:#000;right:480px;"><span style="display:inline-block;transform:scaleX(0.9);transform-origin:right">68.01</span></div>
<div class="t" style="top:679px;height:17px;line-height:17px;font-size:14px;color:#000;right:421px;"><span style="display:inline-block;transform:scaleX(0.9);transform-origin:right">81.90</span></div>
<div class="t" style="top:679px;height:17px;line-height:17px;font-size:14px;color:#000;right:363px;"><span style="display:inline-block;transform:scaleX(0.9);transform-origin:right">63.99</span></div>
<div class="t" style="top:679px;height:17px;line-height:17px;font-size:14px;color:#c0c0c0;right:299px;"><span style="display:inline-block;transform:scaleX(0.9);transform-origin:right">91.92</span></div>
<div class="t" style="top:679px;height:17px;line-height:17px;font-size:14px;color:#c0c0c0;right:242px;"><span style="display:inline-block;transform:scaleX(0.9);transform-origin:right">103.66</span></div>
<div class="t" style="top:679px;height:17px;line-height:17px;font-size:14px;color:#000;right:178px;"><span style="display:inline-block;transform:scaleX(0.9);transform-origin:right">54.15</span></div>
<div class="t" style="top:679px;height:17px;line-height:17px;font-size:14px;color:#000;right:83px;"><span style="display:inline-block;transform:scaleX(0.9);transform-origin:right">1,453,370.62</span></div>
<div class="t" style="top:679px;height:17px;line-height:17px;font-size:14px;color:#000;right:12px;"><span style="display:inline-block;transform:scaleX(0.9);transform-origin:right">73.38</span></div>
<div class="v" style="left:831px;top:42px;height:263px;background:#000"></div>
<div class="v" style="left:1326px;top:42px;height:263px;background:#000"></div>
<div class="h" style="left:831px;top:42px;width:496px;background:#000"></div>
<div class="h" style="left:767px;top:59px;width:560px;background:#000"></div>
<div style="position:absolute;left:767px;top:76px;width:560px;height:2px;background:#000"></div>
<div class="h" style="left:831px;top:304px;width:496px;background:#000"></div>
<div class="t" style="top:43px;height:17px;line-height:17px;font-size:14px;color:#000;font-weight:bold;left:1357px;"><span style="display:inline-block;transform:scaleX(0.912);transform-origin:left">BLENDED PRICES (7 X 24) FOR GRAPH</span></div>
<div class="t" style="top:60px;height:17px;line-height:17px;font-size:14px;color:#000;left:1354px;width:58px;overflow:hidden;padding-left:3px;box-sizing:border-box;"><span style="display:inline-block;transform:scaleX(0.93);transform-origin:left">10-Yr Fixed</span></div>
<div class="t" style="top:60px;height:17px;line-height:17px;font-size:14px;color:#000;left:1413px;width:58px;overflow:hidden;padding-left:2px;box-sizing:border-box;"><span style="display:inline-block;transform:scaleX(0.93);transform-origin:left">5-Yr Fixed</span></div>
<div class="t" style="top:60px;height:17px;line-height:17px;font-size:14px;color:#000;left:1472px;width:57px;overflow:hidden;padding-left:2px;box-sizing:border-box;"><span style="display:inline-block;transform:scaleX(0.93);transform-origin:left">1-Yr Fixed</span></div>
<div class="t" style="top:60px;height:17px;line-height:17px;font-size:14px;color:#c0c0c0;left:1530px;width:63px;overflow:hidden;padding-left:2px;box-sizing:border-box;"><span style="display:inline-block;transform:scaleX(0.93);transform-origin:left">May-Sep Fixed</span></div>
<div class="t" style="top:60px;height:17px;line-height:17px;font-size:14px;color:#c0c0c0;left:1594px;width:56px;overflow:hidden;padding-left:2px;box-sizing:border-box;"><span style="display:inline-block;transform:scaleX(0.93);transform-origin:left">Q3 Fixed</span></div>
<div class="t" style="top:60px;height:17px;line-height:17px;font-size:14px;color:#000;left:1651px;width:63px;overflow:hidden;padding-left:2px;box-sizing:border-box;"><span style="display:inline-block;transform:scaleX(0.93);transform-origin:left">Monthly Price</span></div>
<div class="t" style="top:60px;height:17px;line-height:17px;font-size:14px;color:#000;left:1717px;"><span style="display:inline-block;transform:scaleX(0.93);transform-origin:left">Cost</span></div>
<div class="t" style="top:60px;height:17px;line-height:17px;font-size:14px;color:#000;left:1812px;white-space:nowrap;"><span style="display:inline-block;transform:scaleX(0.93);transform-origin:left">Portfolio Avg</span></div>
<div class="h" style="left:1353px;top:59px;width:528px;background:#000"></div>
<div style="position:absolute;left:1353px;top:76px;width:528px;height:2px;background:#000"></div>
<div class="v" style="left:1714px;top:59px;height:18px;background:#000"></div>
<div class="v" style="left:1809px;top:59px;height:18px;background:#000"></div>
<div style="position:absolute;left:1808px;top:110px;width:74px;height:20px;border:2px solid #217346;box-sizing:border-box"></div>
<div style="position:absolute;left:1877px;top:125px;width:7px;height:7px;background:#217346;border:1px solid #fff;box-sizing:border-box"></div>
<svg style="position:absolute;left:0;top:0" width="1886" height="693" font-family="Liberation Sans, sans-serif" shape-rendering="crispEdges"><rect x="20" y="222" width="710" height="465" fill="#fff"/><path d="M20 222.5H729.5V686.5H20" fill="none" stroke="#000" stroke-width="1"/><rect x="109.5" y="294.5" width="574" height="349" fill="#c0c0c0" stroke="#808080" stroke-width="1"/><line x1="109" y1="573.5" x2="683" y2="573.5" stroke="#000" stroke-width="1" stroke-dasharray="3,1"/><line x1="109" y1="503.5" x2="683" y2="503.5" stroke="#000" stroke-width="1" stroke-dasharray="3,1"/><line x1="109" y1="433.5" x2="683" y2="433.5" stroke="#000" stroke-width="1" stroke-dasharray="3,1"/><line x1="109" y1="363.5" x2="683" y2="363.5" stroke="#000" stroke-width="1" stroke-dasharray="3,1"/><rect x="109.5" y="553.5" width="48" height="90" fill="#969696" stroke="#000" stroke-width="1"/><rect x="109.5" y="489.5" width="48" height="64" fill="#0000ff" stroke="#000" stroke-width="1"/><rect x="109.5" y="425.5" width="48" height="64" fill="#00ccff" stroke="#000" stroke-width="1"/><rect x="109.5" y="414.5" width="48" height="11" fill="#ff0000" stroke="#000" stroke-width="1"/><rect x="157.5" y="549.5" width="48" height="94" fill="#969696" stroke="#000" stroke-width="1"/><rect x="157.5" y="485.5" width="48" height="64" fill="#0000ff" stroke="#000" stroke-width="1"/><rect x="157.5" y="421.5" width="48" height="64" fill="#00ccff" stroke="#000" stroke-width="1"/><rect x="157.5" y="419.5" width="48" height="2" fill="#ff0000" stroke="#000" stroke-width="1"/><rect x="205.5" y="547.5" width="48" height="96" fill="#969696" stroke="#000" stroke-width="1"/><rect x="205.5" y="483.5" width="48" height="64" fill="#0000ff" stroke="#000" stroke-width="1"/><rect x="205.5" y="419.5" width="48" height="64" fill="#00ccff" stroke="#000" stroke-width="1"/><rect x="205.5" y="417.5" width="48" height="2" fill="#ff0000" stroke="#000" stroke-width="1"/><rect x="253.5" y="546.5" width="47" height="97" fill="#969696" stroke="#000" stroke-width="1"/><rect x="253.5" y="482.5" width="47" height="64" fill="#0000ff" stroke="#000" stroke-width="1"/><rect x="253.5" y="418.5" width="47" height="64" fill="#00ccff" stroke="#000" stroke-width="1"/><rect x="253.5" y="412.5" width="47" height="6" fill="#ff0000" stroke="#000" stroke-width="1"/><rect x="300.5" y="546.5" width="48" height="97" fill="#969696" stroke="#000" stroke-width="1"/><rect x="300.5" y="482.5" width="48" height="64" fill="#0000ff" stroke="#000" stroke-width="1"/><rect x="300.5" y="419.5" width="48" height="63" fill="#00ccff" stroke="#000" stroke-width="1"/><rect x="300.5" y="367.5" width="48" height="52" fill="#ff0000" stroke="#000" stroke-width="1"/><rect x="348.5" y="531.5" width="48" height="112" fill="#969696" stroke="#000" stroke-width="1"/><rect x="348.5" y="468.5" width="48" height="63" fill="#0000ff" stroke="#000" stroke-width="1"/><rect x="348.5" y="404.5" width="48" height="64" fill="#00ccff" stroke="#000" stroke-width="1"/><rect x="348.5" y="339.5" width="48" height="65" fill="#ff0000" stroke="#000" stroke-width="1"/><rect x="396.5" y="537.5" width="48" height="106" fill="#969696" stroke="#000" stroke-width="1"/><rect x="396.5" y="473.5" width="48" height="64" fill="#0000ff" stroke="#000" stroke-width="1"/><rect x="396.5" y="410.5" width="48" height="63" fill="#00ccff" stroke="#000" stroke-width="1"/><rect x="396.5" y="324.5" width="48" height="86" fill="#ff0000" stroke="#000" stroke-width="1"/><rect x="444.5" y="541.5" width="48" height="102" fill="#969696" stroke="#000" stroke-width="1"/><rect x="444.5" y="477.5" width="48" height="64" fill="#0000ff" stroke="#000" stroke-width="1"/><rect x="444.5" y="413.5" width="48" height="64" fill="#00ccff" stroke="#000" stroke-width="1"/><rect x="444.5" y="331.5" width="48" height="82" fill="#ff0000" stroke="#000" stroke-width="1"/><rect x="492.5" y="539.5" width="48" height="104" fill="#969696" stroke="#000" stroke-width="1"/><rect x="492.5" y="476.5" width="48" height="63" fill="#0000ff" stroke="#000" stroke-width="1"/><rect x="492.5" y="412.5" width="48" height="64" fill="#00ccff" stroke="#000" stroke-width="1"/><rect x="492.5" y="334.5" width="48" height="78" fill="#ff0000" stroke="#000" stroke-width="1"/><rect x="540.5" y="553.5" width="48" height="90" fill="#969696" stroke="#000" stroke-width="1"/><rect x="540.5" y="489.5" width="48" height="64" fill="#0000ff" stroke="#000" stroke-width="1"/><rect x="540.5" y="425.5" width="48" height="64" fill="#00ccff" stroke="#000" stroke-width="1"/><rect x="540.5" y="386.5" width="48" height="39" fill="#ff0000" stroke="#000" stroke-width="1"/><rect x="588.5" y="549.5" width="47" height="94" fill="#969696" stroke="#000" stroke-width="1"/><rect x="588.5" y="485.5" width="47" height="64" fill="#0000ff" stroke="#000" stroke-width="1"/><rect x="588.5" y="421.5" width="47" height="64" fill="#00ccff" stroke="#000" stroke-width="1"/><rect x="588.5" y="411.5" width="47" height="10" fill="#ff0000" stroke="#000" stroke-width="1"/><rect x="635.5" y="550.5" width="48" height="93" fill="#969696" stroke="#000" stroke-width="1"/><rect x="635.5" y="487.5" width="48" height="63" fill="#0000ff" stroke="#000" stroke-width="1"/><rect x="635.5" y="423.5" width="48" height="64" fill="#00ccff" stroke="#000" stroke-width="1"/><rect x="635.5" y="403.5" width="48" height="20" fill="#ff0000" stroke="#000" stroke-width="1"/><line x1="109.5" y1="294" x2="109.5" y2="644" stroke="#000" stroke-width="1"/><line x1="106" y1="643.5" x2="684" y2="643.5" stroke="#000" stroke-width="1"/><line x1="106" y1="643.5" x2="109" y2="643.5" stroke="#000" stroke-width="1"/><text x="98.8" y="647.2" font-size="11.6px" text-anchor="end" fill="#000" letter-spacing="-0.25">0</text><line x1="106" y1="573.5" x2="109" y2="573.5" stroke="#000" stroke-width="1"/><text x="98.8" y="577.2" font-size="11.6px" text-anchor="end" fill="#000" letter-spacing="-0.25">10,000</text><line x1="106" y1="503.5" x2="109" y2="503.5" stroke="#000" stroke-width="1"/><text x="98.8" y="507.2" font-size="11.6px" text-anchor="end" fill="#000" letter-spacing="-0.25">20,000</text><line x1="106" y1="433.5" x2="109" y2="433.5" stroke="#000" stroke-width="1"/><text x="98.8" y="437.2" font-size="11.6px" text-anchor="end" fill="#000" letter-spacing="-0.25">30,000</text><line x1="106" y1="363.5" x2="109" y2="363.5" stroke="#000" stroke-width="1"/><text x="98.8" y="367.2" font-size="11.6px" text-anchor="end" fill="#000" letter-spacing="-0.25">40,000</text><line x1="106" y1="293.5" x2="109" y2="293.5" stroke="#000" stroke-width="1"/><text x="98.8" y="297.2" font-size="11.6px" text-anchor="end" fill="#000" letter-spacing="-0.25">50,000</text><line x1="109.5" y1="643" x2="109.5" y2="647" stroke="#000" stroke-width="1"/><line x1="157.5" y1="643" x2="157.5" y2="647" stroke="#000" stroke-width="1"/><line x1="205.5" y1="643" x2="205.5" y2="647" stroke="#000" stroke-width="1"/><line x1="253.5" y1="643" x2="253.5" y2="647" stroke="#000" stroke-width="1"/><line x1="300.5" y1="643" x2="300.5" y2="647" stroke="#000" stroke-width="1"/><line x1="348.5" y1="643" x2="348.5" y2="647" stroke="#000" stroke-width="1"/><line x1="396.5" y1="643" x2="396.5" y2="647" stroke="#000" stroke-width="1"/><line x1="444.5" y1="643" x2="444.5" y2="647" stroke="#000" stroke-width="1"/><line x1="492.5" y1="643" x2="492.5" y2="647" stroke="#000" stroke-width="1"/><line x1="540.5" y1="643" x2="540.5" y2="647" stroke="#000" stroke-width="1"/><line x1="588.5" y1="643" x2="588.5" y2="647" stroke="#000" stroke-width="1"/><line x1="635.5" y1="643" x2="635.5" y2="647" stroke="#000" stroke-width="1"/><line x1="683.5" y1="643" x2="683.5" y2="647" stroke="#000" stroke-width="1"/><text x="134.0" y="661" font-size="11.3px" font-weight="bold" text-anchor="middle" fill="#000">Jan</text><text x="182.0" y="661" font-size="11.3px" font-weight="bold" text-anchor="middle" fill="#000">Feb</text><text x="230.0" y="661" font-size="11.3px" font-weight="bold" text-anchor="middle" fill="#000">Mar</text><text x="277.5" y="661" font-size="11.3px" font-weight="bold" text-anchor="middle" fill="#000">Apr</text><text x="325.0" y="661" font-size="11.3px" font-weight="bold" text-anchor="middle" fill="#000">May</text><text x="373.0" y="661" font-size="11.3px" font-weight="bold" text-anchor="middle" fill="#000">Jun</text><text x="421.0" y="661" font-size="11.3px" font-weight="bold" text-anchor="middle" fill="#000">Jul</text><text x="469.0" y="661" font-size="11.3px" font-weight="bold" text-anchor="middle" fill="#000">Aug</text><text x="517.0" y="661" font-size="11.3px" font-weight="bold" text-anchor="middle" fill="#000">Sep</text><text x="565.0" y="661" font-size="11.3px" font-weight="bold" text-anchor="middle" fill="#000">Oct</text><text x="612.5" y="661" font-size="11.3px" font-weight="bold" text-anchor="middle" fill="#000">Nov</text><text x="660.0" y="661" font-size="11.3px" font-weight="bold" text-anchor="middle" fill="#000">Dec</text><text x="396.3" y="252.8" font-size="16px" font-weight="bold" text-anchor="middle" fill="#000">Covering Short (Peak) Position with a Portfolio of Forward Contracts</text><text x="396.4" y="270.6" font-size="15.25px" text-anchor="middle" fill="#000">Scenario 2: 30% Allocation to 10-Yr and 5-Yr Contracts</text><text transform="translate(55,470) rotate(-90)" font-size="16px" font-weight="bold" text-anchor="middle" fill="#000">Average Monthly Peak (MW)</text><rect x="318.5" y="523.5" width="155" height="94" fill="#fff" stroke="#000" stroke-width="1"/><rect x="354.5" y="532.5" width="5" height="5" fill="#ff0000" stroke="#000" stroke-width="1"/><text x="362" y="538.2" font-size="9.7px" fill="#000" shape-rendering="auto">Monthly</text><rect x="354.5" y="555.5" width="5" height="5" fill="#00ccff" stroke="#000" stroke-width="1"/><text x="362" y="561.1" font-size="9.7px" fill="#000" shape-rendering="auto">5-Yr Fixed Price</text><rect x="354.5" y="579.5" width="5" height="5" fill="#0000ff" stroke="#000" stroke-width="1"/><text x="362" y="585.1" font-size="9.7px" fill="#000" shape-rendering="auto">10-Yr Fixed Price</text><rect x="354.5" y="602.5" width="5" height="5" fill="#969696" stroke="#000" stroke-width="1"/><text x="362" y="608.0" font-size="9.7px" fill="#000" shape-rendering="auto">UDC Resources</text></svg>
</body></html>
